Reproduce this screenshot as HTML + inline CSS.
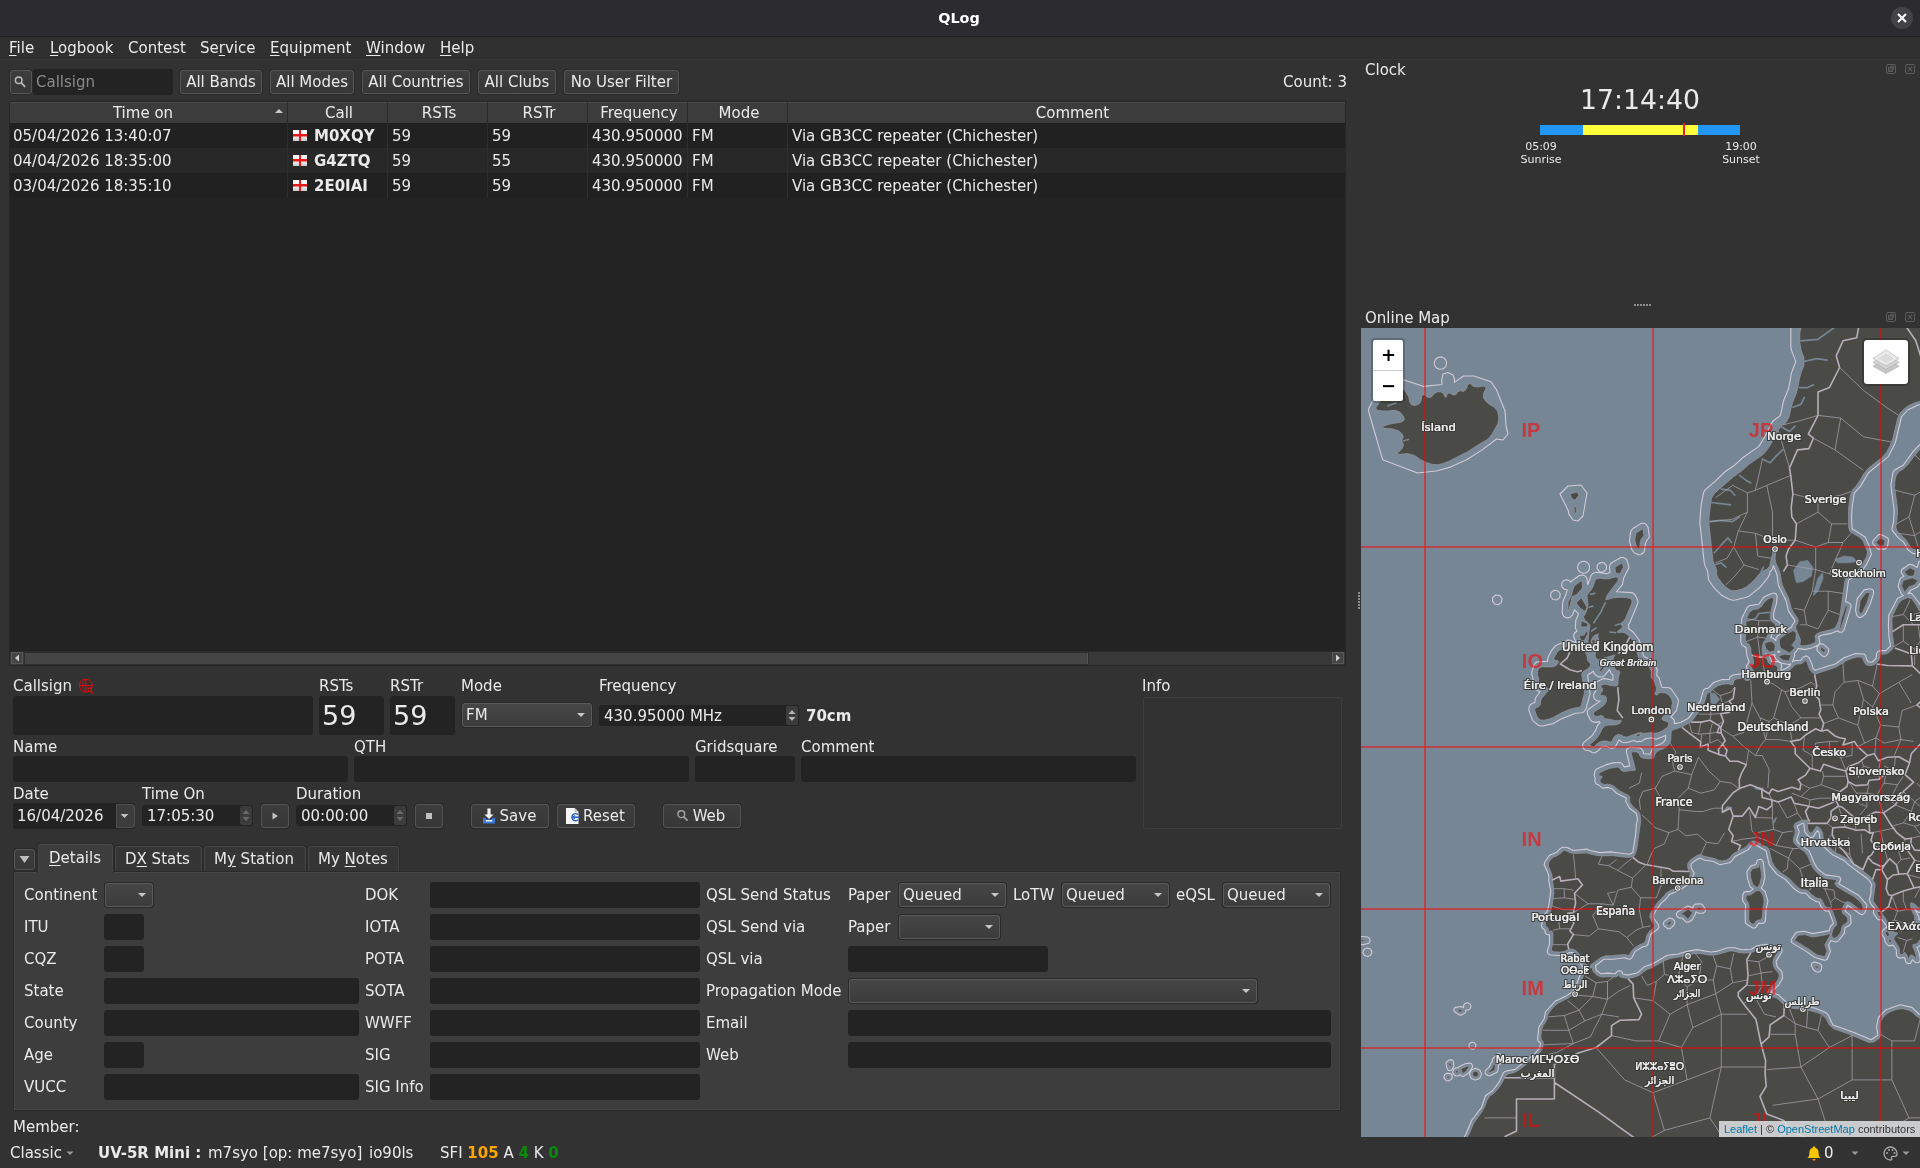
<!DOCTYPE html>
<html lang="en"><head><meta charset="utf-8"><title>QLog</title>
<style>
*{box-sizing:border-box;margin:0;padding:0}
html,body{width:1920px;height:1168px;overflow:hidden;background:#323232}
body{font-family:"DejaVu Sans","Liberation Sans",sans-serif;font-size:15px;color:#eaeaea;position:relative}
.a{position:absolute;white-space:nowrap}
.t{position:absolute;white-space:nowrap;line-height:20px;height:20px}
.in{position:absolute;background:#232323;border-radius:3px}
.btn{position:absolute;background:linear-gradient(#3d3d3d,#373737);border:1px solid #565656;border-radius:3px;box-shadow:0 0 0 1px #2a2a2a;text-align:center;line-height:22px;white-space:nowrap}
.cmb{position:absolute;background:linear-gradient(#464646,#3c3c3c);border:1px solid #5a5a5a;border-radius:3px;box-shadow:0 0 0 1px #292929;line-height:22px;padding-left:3px;white-space:nowrap}
.cmb:after{content:"";position:absolute;right:6px;top:8.500px;border:4px solid transparent;border-top:4px solid #c8c8c8;border-bottom:0}
u{text-decoration-thickness:1px;text-underline-offset:2px}
.th{position:absolute;top:102px;height:21px;background:#3c3c3c;border-right:1px solid #2a2a2a;border-top:1px solid #4c4c4c;text-align:center;line-height:21px;padding-left:3px}
.row{position:absolute;left:10px;width:1335px;height:25px}
.row span{position:absolute;top:1px;line-height:25px;white-space:nowrap}
.vl{position:absolute;top:123px;width:1px;height:75px;background:#2e2e2e}
#root{position:absolute;left:0;top:0;width:1920px;height:1168px;will-change:transform}
</style></head><body><div id="root">
<!-- title bar -->
<div class="a" style="left:0;top:0;width:1920px;height:37px;background:#2c2c30;border-bottom:1px solid #1e1e20"></div>
<div class="a" style="left:0;top:8px;width:1918px;text-align:center;font-weight:bold;font-size:14.400px;line-height:20px;color:#fff">QLog</div>
<div class="a" style="left:1891px;top:7px;width:22px;height:22px;border-radius:11px;background:#434347"></div>
<svg class="a" style="left:1891px;top:7px" width="22" height="22"><path d="M7 7l8 8M15 7l-8 8" stroke="#fff" stroke-width="2.100" fill="none"/></svg>
<!-- menu bar -->
<div class="a" style="left:0;top:37px;width:1920px;height:23px;background:#303030;border-bottom:1px solid #363636"></div>
<div class="t" style="left:9px;top:38px"><u>F</u>ile</div>
<div class="t" style="left:50px;top:38px"><u>L</u>ogbook</div>
<div class="t" style="left:128px;top:38px">Contest</div>
<div class="t" style="left:200px;top:38px">Se<u>r</u>vice</div>
<div class="t" style="left:270px;top:38px"><u>E</u>quipment</div>
<div class="t" style="left:366px;top:38px"><u>W</u>indow</div>
<div class="t" style="left:440px;top:38px"><u>H</u>elp</div>
<!-- filter row -->
<div class="btn" style="left:10px;top:70px;width:22px;height:24px"></div>
<svg class="a" style="left:10px;top:70px" width="22" height="24"><circle cx="8.700" cy="10.300" r="3.300" stroke="#bdbdbd" stroke-width="1.500" fill="none"/><path d="M11.200 12.800l4 4" stroke="#bdbdbd" stroke-width="1.700" fill="none"/></svg>
<div class="in" style="left:33px;top:69px;width:140px;height:26px"></div>
<div class="t" style="left:36px;top:72px;color:#8a8a8a">Callsign</div>
<div class="btn" style="left:180px;top:70px;width:82px;height:24px">All Bands</div>
<div class="btn" style="left:270px;top:70px;width:84px;height:24px">All Modes</div>
<div class="btn" style="left:362px;top:70px;width:108px;height:24px">All Countries</div>
<div class="btn" style="left:478px;top:70px;width:78px;height:24px">All Clubs</div>
<div class="btn" style="left:564px;top:70px;width:115px;height:24px">No User Filter</div>
<div class="t" style="left:1200px;top:72px;width:1147px;text-align:right;left:200px">Count: 3</div>
<!-- table -->
<div class="a" style="left:9px;top:101px;width:1337px;height:565px;background:#232323;border:1px solid #262626"></div>
<div class="th" style="left:10px;width:278px;padding-right:14px">Time on</div>
<svg class="a" style="left:274px;top:108px" width="10" height="6"><path d="M1 5l4-4 4 4z" fill="#c8c8c8"/></svg>
<div class="th" style="left:288px;width:100px">Call</div>
<div class="th" style="left:388px;width:100px">RSTs</div>
<div class="th" style="left:488px;width:100px">RSTr</div>
<div class="th" style="left:588px;width:100px">Frequency</div>
<div class="th" style="left:688px;width:100px">Mode</div>
<div class="th" style="left:788px;width:557px;border-right:0;padding-left:12px">Comment</div>
<div class="row" style="top:123px;background:#212121"><span style="left:3px">05/04/2026 13:40:07</span><span style="left:304px;font-weight:bold">M0XQY</span><span style="left:382px">59</span><span style="left:482px">59</span><span style="left:582px">430.950000</span><span style="left:682px">FM</span><span style="left:782px">Via GB3CC repeater (Chichester)</span></div>
<div class="row" style="top:148px;background:#282828"><span style="left:3px">04/04/2026 18:35:00</span><span style="left:304px;font-weight:bold">G4ZTQ</span><span style="left:382px">59</span><span style="left:482px">55</span><span style="left:582px">430.950000</span><span style="left:682px">FM</span><span style="left:782px">Via GB3CC repeater (Chichester)</span></div>
<div class="row" style="top:173px;background:#212121"><span style="left:3px">03/04/2026 18:35:10</span><span style="left:304px;font-weight:bold">2E0IAI</span><span style="left:382px">59</span><span style="left:482px">59</span><span style="left:582px">430.950000</span><span style="left:682px">FM</span><span style="left:782px">Via GB3CC repeater (Chichester)</span></div>
<div class="vl" style="left:287px"></div><div class="vl" style="left:387px"></div><div class="vl" style="left:487px"></div><div class="vl" style="left:587px"></div><div class="vl" style="left:687px"></div><div class="vl" style="left:787px"></div>
<svg class="a" style="left:293px;top:130px" width="15" height="62"><defs><linearGradient id="fg" x1="0" y1="0" x2="0" y2="1"><stop offset="0" stop-color="#fdfdfd"/><stop offset="0.600" stop-color="#f0f0f0"/><stop offset="1" stop-color="#c9c9c9"/></linearGradient></defs><g id="fl"><rect x="0" y="0" width="14" height="11" fill="url(#fg)"/><rect x="6" y="0" width="2" height="11" fill="#e81818"/><rect x="0" y="4" width="14" height="2.500" fill="#e81818"/></g><use href="#fl" y="25"/><use href="#fl" y="50"/></svg>
<!-- hscroll -->
<div class="a" style="left:10px;top:651px;width:1335px;height:14px;background:#383838;border-top:1px solid #2a2a2a"></div>
<div class="a" style="left:24px;top:652px;width:1065px;height:13px;background:#454545;border:1px solid #2e2e2e;box-shadow:inset -1px 0 0 #555"></div>
<div class="a" style="left:11px;top:652px;width:12px;height:12px;background:#444;border:1px solid #595959"></div>
<div class="a" style="left:1332px;top:652px;width:12px;height:12px;background:#444;border:1px solid #595959"></div>
<svg class="a" style="left:11px;top:652px" width="12" height="12"><path d="M8 2.5v7l-4-3.5z" fill="#d0d0d0"/></svg>
<svg class="a" style="left:1332px;top:652px" width="12" height="12"><path d="M4 2.5v7l4-3.5z" fill="#d0d0d0"/></svg>
<!-- entry form -->
<div class="t" style="left:13px;top:676px">Callsign</div>
<svg class="a" style="left:77px;top:677px" width="18" height="18" viewBox="0 0 18 18"><g stroke="#e40808" stroke-width="1" fill="none"><circle cx="8.800" cy="8.600" r="6.500"/><path d="M2.300 8.600h13M8.800 2.100v13M8.800 2.100c-4.200 3.500-4.200 9.500 0 13"/><circle cx="12.700" cy="12.700" r="1.800" fill="#323232" stroke-width="1.200"/><path d="M14 14.100l2 2.200" stroke-width="1.300"/></g></svg>
<div class="in" style="left:13px;top:696px;width:300px;height:39px"></div>
<div class="t" style="left:319px;top:676px">RSTs</div>
<div class="in" style="left:319px;top:696px;width:65px;height:39px"></div>
<div class="a" style="left:322px;top:698px;font-size:27px;line-height:35px">59</div>
<div class="t" style="left:390px;top:676px">RSTr</div>
<div class="in" style="left:390px;top:696px;width:65px;height:39px"></div>
<div class="a" style="left:393px;top:698px;font-size:27px;line-height:35px">59</div>
<div class="t" style="left:461px;top:676px">Mode</div>
<div class="cmb" style="left:462px;top:703px;width:130px;height:24px">FM</div>
<div class="t" style="left:599px;top:676px">Frequency</div>
<div class="in" style="left:599px;top:705px;width:200px;height:21px"></div>
<div class="t" style="left:604px;top:706px">430.95000 MHz</div>
<div class="a" style="left:786px;top:706px;width:12px;height:19px;background:#3c3c3c;border-radius:2px"></div>
<svg class="a" style="left:786px;top:706px" width="12" height="19"><path d="M2.5 8l3.5-4 3.500 4zM2.500 11l3.500 4 3.500-4z" fill="#b4b4b4"/></svg>
<div class="t" style="left:806px;top:706px;font-weight:bold">70cm</div>
<div class="t" style="left:13px;top:737px">Name</div>
<div class="in" style="left:13px;top:756px;width:335px;height:26px"></div>
<div class="t" style="left:354px;top:737px">QTH</div>
<div class="in" style="left:354px;top:756px;width:335px;height:26px"></div>
<div class="t" style="left:695px;top:737px">Gridsquare</div>
<div class="in" style="left:695px;top:756px;width:100px;height:26px"></div>
<div class="t" style="left:801px;top:737px">Comment</div>
<div class="in" style="left:801px;top:756px;width:335px;height:26px"></div>
<div class="t" style="left:1142px;top:676px">Info</div>
<div class="a" style="left:1143px;top:697px;width:199px;height:132px;border:1px solid #3d3d3d;border-radius:2px"></div>
<div class="t" style="left:13px;top:784px">Date</div>
<div class="in" style="left:13px;top:803px;width:122px;height:26px"></div>
<div class="t" style="left:17px;top:806px">16/04/2026</div>
<div class="a" style="left:116px;top:804px;width:19px;height:24px;background:#3c3c3c;border:1px solid #4e4e4e;border-radius:0 3px 3px 0"></div>
<svg class="a" style="left:115px;top:804px" width="20" height="24"><path d="M5.5 10h8l-4 4z" fill="#c0c0c0"/></svg>
<div class="t" style="left:142px;top:784px">Time On</div>
<div class="in" style="left:142px;top:805px;width:111px;height:21px"></div>
<div class="t" style="left:147px;top:806px">17:05:30</div>
<div class="a" style="left:240px;top:806px;width:12px;height:19px;background:#3c3c3c;border-radius:2px"></div>
<svg class="a" style="left:240px;top:806px" width="12" height="19"><path d="M2.500 8l3.500-4 3.500 4zM2.500 11l3.500 4 3.500-4z" fill="#6a6a6a"/></svg>
<div class="btn" style="left:261px;top:804px;width:28px;height:24px"></div>
<svg class="a" style="left:261px;top:804px" width="28" height="24"><path d="M11.500 8.500v7l5.500-3.500z" fill="#c0c0c0"/></svg>
<div class="t" style="left:296px;top:784px">Duration</div>
<div class="in" style="left:296px;top:805px;width:111px;height:21px"></div>
<div class="t" style="left:301px;top:806px">00:00:00</div>
<div class="a" style="left:394px;top:806px;width:12px;height:19px;background:#3c3c3c;border-radius:2px"></div>
<svg class="a" style="left:394px;top:806px" width="12" height="19"><path d="M2.500 8l3.500-4 3.500 4zM2.500 11l3.500 4 3.500-4z" fill="#6a6a6a"/></svg>
<div class="btn" style="left:415px;top:804px;width:28px;height:24px"></div>
<div class="a" style="left:426px;top:813px;width:6px;height:6px;background:#c0c0c0"></div>
<div class="btn" style="left:471px;top:804px;width:78px;height:24px;padding-left:16px">Save</div>
<svg class="a" style="left:481px;top:807px" width="16" height="18" viewBox="0 0 16 18"><path d="M6.400 1.500h3.200v6h3l-4.600 4.600-4.600-4.600h3z" fill="#f0f0f0"/><path d="M2 10.700h2.400l1.300 1.700h4.600l1.300-1.700h2.400v5.800h-12z" fill="#3b7ad4"/><rect x="4.800" y="13" width="6.400" height="1.500" fill="#f4f4f4"/></svg>
<div class="btn" style="left:557px;top:804px;width:78px;height:24px;padding-left:16px">Reset</div>
<svg class="a" style="left:565px;top:807px" width="16" height="18" viewBox="0 0 16 18"><path d="M1 1h8.500l4 3.800v12.200h-12.500z" fill="#f6f6f6"/><path d="M9.500 1v3.800h4z" fill="#c4c4c4"/><path d="M12.900 7.700a3.500 3.500 0 1 0 0 5" stroke="#2a62c8" stroke-width="1.500" fill="none"/><path d="M14.200 10.200h-5" stroke="#2a62c8" stroke-width="1.600"/><path d="M6.400 10.200l3.400-2.300v4.600z" fill="#2a62c8"/></svg>
<div class="btn" style="left:663px;top:804px;width:78px;height:24px;padding-left:14px">Web</div>
<svg class="a" style="left:675px;top:808px" width="16" height="16"><circle cx="6.300" cy="6.200" r="3.400" stroke="#a4a4a4" stroke-width="1.400" fill="none"/><path d="M8.800 8.800l3.800 3.800" stroke="#a4a4a4" stroke-width="1.700"/></svg>
<!-- tabs -->
<div class="a" style="left:13px;top:871px;width:1328px;height:240px;background:#3d3d3d;border:1px solid #2a2a2a;box-shadow:inset 0 0 0 1px #464646"></div>
<div class="btn" style="left:14px;top:849px;width:21px;height:21px"></div>
<svg class="a" style="left:14px;top:848.500px" width="21" height="21"><path d="M5.500 7h10l-5 7z" fill="#bdbdbd"/></svg>
<div class="a" style="left:37px;top:843px;width:77px;height:30px;background:#3d3d3d;border:1px solid #2a2a2a;border-bottom:0;border-radius:3px 3px 0 0;box-shadow:inset 0 1px 0 0 #4a4a4a,inset 1px 0 0 0 #464646,inset -1px 0 0 0 #464646"></div>
<div class="a" style="left:115px;top:846px;width:87px;height:25px;background:#353535;border:1px solid #454545;border-bottom:0;border-radius:3px 3px 0 0;box-shadow:0 0 0 1px #2a2a2a"></div>
<div class="a" style="left:204px;top:846px;width:102px;height:25px;background:#353535;border:1px solid #454545;border-bottom:0;border-radius:3px 3px 0 0;box-shadow:0 0 0 1px #2a2a2a"></div>
<div class="a" style="left:308px;top:846px;width:91px;height:25px;background:#353535;border:1px solid #454545;border-bottom:0;border-radius:3px 3px 0 0;box-shadow:0 0 0 1px #2a2a2a"></div>
<div class="a" style="left:13px;top:871px;width:1328px;height:1px;background:#2a2a2a"></div>
<div class="a" style="left:38px;top:871px;width:75px;height:2px;background:#3d3d3d"></div>
<div class="t" style="left:49px;top:848px"><u>D</u>etails</div>
<div class="t" style="left:125px;top:849px">D<u>X</u> Stats</div>
<div class="t" style="left:214px;top:849px">M<u>y</u> Station</div>
<div class="t" style="left:318px;top:849px">My <u>N</u>otes</div>
<!-- details pane -->
<div class="t" style="left:24px;top:885px">Continent</div>
<div class="cmb" style="left:105px;top:883px;width:48px;height:24px"></div>
<div class="t" style="left:24px;top:917px">ITU</div>
<div class="in" style="left:104px;top:914px;width:40px;height:26px"></div>
<div class="t" style="left:24px;top:949px">CQZ</div>
<div class="in" style="left:104px;top:946px;width:40px;height:26px"></div>
<div class="t" style="left:24px;top:981px">State</div>
<div class="in" style="left:104px;top:978px;width:255px;height:26px"></div>
<div class="t" style="left:24px;top:1013px">County</div>
<div class="in" style="left:104px;top:1010px;width:255px;height:26px"></div>
<div class="t" style="left:24px;top:1045px">Age</div>
<div class="in" style="left:104px;top:1042px;width:40px;height:26px"></div>
<div class="t" style="left:24px;top:1077px">VUCC</div>
<div class="in" style="left:104px;top:1074px;width:255px;height:26px"></div>
<div class="t" style="left:365px;top:885px">DOK</div>
<div class="in" style="left:430px;top:882px;width:270px;height:26px"></div>
<div class="t" style="left:365px;top:917px">IOTA</div>
<div class="in" style="left:430px;top:914px;width:270px;height:26px"></div>
<div class="t" style="left:365px;top:949px">POTA</div>
<div class="in" style="left:430px;top:946px;width:270px;height:26px"></div>
<div class="t" style="left:365px;top:981px">SOTA</div>
<div class="in" style="left:430px;top:978px;width:270px;height:26px"></div>
<div class="t" style="left:365px;top:1013px">WWFF</div>
<div class="in" style="left:430px;top:1010px;width:270px;height:26px"></div>
<div class="t" style="left:365px;top:1045px">SIG</div>
<div class="in" style="left:430px;top:1042px;width:270px;height:26px"></div>
<div class="t" style="left:365px;top:1077px">SIG Info</div>
<div class="in" style="left:430px;top:1074px;width:270px;height:26px"></div>
<div class="t" style="left:706px;top:885px">QSL Send Status</div>
<div class="t" style="left:706px;top:917px">QSL Send via</div>
<div class="t" style="left:706px;top:949px">QSL via</div>
<div class="t" style="left:706px;top:981px">Propagation Mode</div>
<div class="t" style="left:706px;top:1013px">Email</div>
<div class="t" style="left:706px;top:1045px">Web</div>
<div class="t" style="left:848px;top:885px">Paper</div>
<div class="cmb" style="left:899px;top:883px;width:107px;height:24px">Queued</div>
<div class="t" style="left:1013px;top:885px">LoTW</div>
<div class="cmb" style="left:1062px;top:883px;width:107px;height:24px">Queued</div>
<div class="t" style="left:1176px;top:885px">eQSL</div>
<div class="cmb" style="left:1223px;top:883px;width:107px;height:24px">Queued</div>
<div class="t" style="left:848px;top:917px">Paper</div>
<div class="cmb" style="left:899px;top:915px;width:101px;height:24px"></div>
<div class="in" style="left:848px;top:946px;width:200px;height:26px"></div>
<div class="cmb" style="left:849px;top:979px;width:408px;height:24px"></div>
<div class="in" style="left:848px;top:1010px;width:483px;height:26px"></div>
<div class="in" style="left:848px;top:1042px;width:483px;height:26px"></div>
<div class="t" style="left:13px;top:1117px">Member:</div>
<!-- status bar -->
<div class="t" style="left:10px;top:1143px">Classic</div>
<svg class="a" style="left:66px;top:1151px" width="8" height="5"><path d="M0.500 0.500h7l-3.500 3.500z" fill="#9a9a9a"/></svg>
<div class="t" style="left:98px;top:1143px"><b>UV-5R Mini :</b></div>
<div class="t" style="left:208px;top:1143px">m7syo [op: me7syo]</div>
<div class="t" style="left:369px;top:1143px">io90ls</div>
<div class="t" style="left:440px;top:1143px">SFI <b style="color:#ffa500">105</b> A <b style="color:#0a8a0a">4</b> K <b style="color:#0a8a0a">0</b></div>
<svg class="a" style="left:1806px;top:1144.500px" width="16" height="18" viewBox="0 0 16 18"><path d="M8 1.500c.8 0 1.300.5 1.300 1.200 2.200.7 3.300 2.500 3.300 5 0 3 .6 4.200 2 5.300h-13.200c1.400-1.100 2-2.300 2-5.300 0-2.500 1.100-4.300 3.300-5 0-.7.500-1.200 1.300-1.200z" fill="#fdc500"/><path d="M6.300 14h3.400a1.700 1.700 0 0 1-3.400 0z" fill="#f08a10"/></svg>
<div class="t" style="left:1824px;top:1143px">0</div>
<svg class="a" style="left:1851px;top:1151px" width="8" height="5"><path d="M0.500 0.500h7l-3.500 3.500z" fill="#9a9a9a"/></svg>
<svg class="a" style="left:1882px;top:1145px" width="17" height="17" viewBox="0 0 17 17"><path d="M8.500 2a6.500 6.500 0 1 0 0 13c1.300 0 1.600-.9 1.100-1.700-.6-1 .1-2 1.200-2h2.200c1.200 0 2-1 2-2.300 0-3.900-2.900-7-6.500-7z" stroke="#a8a8a8" stroke-width="1.300" fill="none"/><circle cx="5" cy="8" r="1" fill="#a8a8a8"/><circle cx="7" cy="5" r="1" fill="#a8a8a8"/><circle cx="10.500" cy="5" r="1" fill="#a8a8a8"/><circle cx="12.500" cy="8" r="1" fill="#a8a8a8"/></svg>
<svg class="a" style="left:1902px;top:1151px" width="8" height="5"><path d="M0.500 0.500h7l-3.500 3.500z" fill="#9a9a9a"/></svg>
<!-- clock dock -->
<div class="t" style="left:1365px;top:60px">Clock</div>
<svg class="a" style="left:1885px;top:63px" width="32" height="12"><g stroke="#5c5c5c" fill="none" stroke-width="1"><rect x="1.500" y="1.500" width="9" height="9" rx="1.500"/><rect x="3.700" y="4.700" width="3.600" height="3.600" stroke-width="1.300"/><path d="M5.500 4v-.800h3.300v3.300h-.800" stroke-width="1"/><rect x="20.500" y="1.500" width="9" height="9" rx="1.500"/><path d="M22.700 3.700l4.600 4.600M27.300 3.700l-4.600 4.600" stroke-width="1.200"/></g></svg>
<div class="a" style="left:1540px;top:83px;width:200px;text-align:center;font-size:26.700px;line-height:34px">17:14:40</div>
<div class="a" style="left:1540px;top:125px;width:200px;height:10px;background:#2196f3"></div>
<div class="a" style="left:1583px;top:125px;width:115px;height:10px;background:#ffff3b"></div>
<div class="a" style="left:1683px;top:123px;width:2px;height:13px;background:#e02020"></div>
<div class="a" style="left:1491px;top:140px;width:100px;text-align:center;font-size:11px;line-height:13px">05:09<br>Sunrise</div>
<div class="a" style="left:1691px;top:140px;width:100px;text-align:center;font-size:11px;line-height:13px">19:00<br>Sunset</div>
<!-- splitters -->
<svg class="a" style="left:1634px;top:304px" width="18" height="2"><path d="M0 1h18" stroke="#8e8e8e" stroke-width="2" stroke-dasharray="2 1"/></svg>
<svg class="a" style="left:1358px;top:592px" width="2" height="18"><path d="M1 0v18" stroke="#8e8e8e" stroke-width="2" stroke-dasharray="2 1"/></svg>
<!-- map dock -->
<div class="t" style="left:1365px;top:308px">Online Map</div>
<svg class="a" style="left:1885px;top:311px" width="32" height="12"><g stroke="#5c5c5c" fill="none" stroke-width="1"><rect x="1.500" y="1.500" width="9" height="9" rx="1.500"/><rect x="3.700" y="4.700" width="3.600" height="3.600" stroke-width="1.300"/><path d="M5.500 4v-.800h3.300v3.300h-.800" stroke-width="1"/><rect x="20.500" y="1.500" width="9" height="9" rx="1.500"/><path d="M22.700 3.700l4.600 4.600M27.300 3.700l-4.600 4.600" stroke-width="1.200"/></g></svg>
<div class="a" style="left:1361px;top:328px;width:559px;height:809px;overflow:hidden;background:#768694">
<svg width="559" height="809" viewBox="0 0 559 809" style="position:absolute;left:0;top:0">
<path d="M82.9 30.0L80.7 29.1L78.3 29.1L76.0 30.0L74.3 31.7L73.4 33.9L73.4 36.4L74.3 38.6L76.0 40.3L78.3 41.2L80.7 41.2L82.9 40.3L84.6 38.6L85.5 36.4L85.5 33.9L84.6 31.7ZM82.0 46.0L80.7 51.9L81.0 56.5L63.0 58.4L42.4 51.8L39.7 53.7L37.3 52.4L30.3 52.6L28.7 54.1L25.7 60.4L18.9 64.7L17.2 69.3L11.3 73.4L7.5 81.0L7.5 83.0L21.7 131.8L56.5 145.0L75.3 143.0L88.5 139.4L105.5 131.8L120.5 122.4L135.6 111.0L142.0 112.0L147.0 106.0L145.0 98.0L144.0 83.0L135.6 62.0L130.0 53.7L113.0 48.0L102.6 48.0L93.4 54.4L93.6 51.2L92.0 47.0L87.0 44.5ZM-4.8 609.7L-5.5 611.7L-4.6 614.0L1.5 616.9L7.8 615.2L9.2 613.0L8.6 610.4L6.5 609.0L-2.1 608.3ZM3.4 621.1L2.3 622.6L1.9 624.7L3.4 627.5L6.7 628.5L9.4 627.5L10.9 624.7L10.5 622.6L9.4 621.1L6.1 620.0ZM103.6 675.8L102.6 677.5L102.7 679.7L100.1 678.5L94.1 679.4L92.8 681.3L93.2 683.5L98.5 687.1L100.4 686.9L103.8 685.2L104.8 683.8L104.8 681.8L106.4 682.2L108.8 681.2L110.0 678.3L109.5 676.7L107.8 675.2L106.0 674.8ZM90.6 731.6L88.0 732.0L85.9 733.5L84.8 735.2L86.0 740.5L87.4 742.3L88.5 742.6L90.8 742.0L93.0 738.1L92.3 733.1ZM97.4 739.0L97.0 739.8L94.9 739.9L92.9 740.9L91.6 743.9L92.2 746.1L94.9 748.0L97.1 748.0L99.2 746.7L100.3 748.0L102.2 748.5L107.3 745.3L111.1 739.8L111.6 737.9L110.5 735.8L108.3 735.1L104.2 735.7ZM83.2 750.4L85.3 752.6L88.1 752.9L90.8 751.1L91.4 748.1L90.0 745.9L86.3 745.1L83.6 746.8L82.9 748.6ZM261.8 646.0L260.8 643.6L258.4 642.6L256.0 643.6L254.2 645.7L247.0 645.1L239.6 645.7L235.1 642.0L234.6 637.8L242.9 631.2L252.6 631.2L263.7 629.7L267.9 631.2L269.5 630.9L271.1 629.3L274.1 623.4L281.9 618.8L284.7 618.2L286.8 616.8L289.5 606.5L296.6 601.3L298.0 599.2L297.4 596.6L292.8 590.5L292.0 588.0L294.9 582.5L300.2 575.1L304.6 571.5L308.4 566.6L318.7 562.3L330.1 554.2L333.2 545.0L330.1 539.7L330.1 536.1L333.8 532.7L338.8 529.9L343.9 532.2L351.8 533.2L358.9 536.7L368.4 534.8L370.4 533.5L374.0 528.6L387.1 521.8L390.9 517.0L393.3 516.2L405.0 522.7L408.2 536.7L415.7 546.1L424.1 551.2L433.7 561.3L439.1 564.9L444.9 565.3L449.6 570.4L455.4 573.8L457.9 573.8L460.2 578.9L463.6 582.3L465.8 583.2L467.9 583.0L472.5 595.4L469.4 598.5L468.1 602.6L451.6 605.6L443.6 603.2L436.5 604.0L434.4 605.2L430.1 611.8L430.5 614.2L431.4 615.1L444.9 623.1L453.9 629.5L462.9 632.1L464.3 632.2L466.2 631.2L469.5 623.3L467.5 617.0L470.1 612.5L474.8 614.1L477.2 613.0L483.3 605.3L484.1 599.7L488.6 597.2L490.1 595.3L489.6 587.6L484.0 582.9L486.7 577.1L499.1 586.0L501.4 586.6L503.8 585.1L505.9 577.6L505.1 575.8L498.0 567.6L477.7 555.8L479.7 551.7L479.1 549.6L478.2 548.7L464.2 546.9L456.4 540.6L452.7 534.0L448.4 523.1L437.6 515.4L435.5 511.9L438.2 503.9L436.2 498.1L441.7 495.2L442.8 495.3L443.7 503.7L447.6 508.4L449.6 509.6L452.2 508.9L456.3 502.6L458.2 504.5L459.1 512.5L463.0 519.1L471.4 526.7L483.5 532.8L488.3 537.4L506.9 551.0L509.3 554.2L510.8 556.7L509.9 560.4L509.9 566.2L508.2 572.3L510.3 576.7L514.0 580.9L512.7 582.1L512.3 584.6L516.0 590.8L517.7 591.7L521.1 591.7L525.1 597.4L526.0 599.2L523.9 600.3L521.3 603.2L520.7 605.4L521.1 606.7L523.7 610.8L523.8 613.0L526.1 616.7L528.4 617.9L532.0 617.1L535.2 621.5L535.5 626.9L536.6 629.2L538.9 630.1L543.5 629.5L544.9 634.2L547.1 635.7L549.8 635.1L551.4 631.7L554.5 634.7L557.8 634.5L559.0 633.1L559.3 631.1L558.2 624.7L555.9 619.4L557.8 618.8L560.5 615.4L564.9 617.7L567.5 617.7L569.3 615.8L569.6 612.7L573.7 610.9L575.0 609.3L575.0 606.7L570.1 598.9L560.1 592.1L558.1 591.6L557.9 589.0L553.7 580.9L555.7 583.2L558.0 584.4L571.1 580.3L572.7 578.8L572.8 576.2L569.2 572.2L571.9 570.2L589.0 570.0L589.0 -30.0L584.3 -30.0L584.3 13.5L580.0 -30.0L450.7 -30.0L448.5 -26.8L446.8 -27.1L443.4 -26.4L440.4 -24.5L438.5 -21.6L430.5 -2.8L429.8 0.5L429.8 18.8L430.4 22.1L434.8 33.6L430.4 44.9L427.8 60.0L422.5 73.0L419.3 87.6L412.3 92.8L410.6 94.9L404.7 107.2L397.9 118.4L381.6 129.8L372.9 137.8L364.2 143.5L354.3 153.1L343.6 162.3L342.3 165.6L340.0 177.7L338.8 194.4L343.4 235.9L346.7 243.6L347.4 251.5L352.9 259.7L360.9 267.6L368.7 271.5L372.2 272.2L374.3 272.0L385.4 269.3L388.3 267.9L399.1 259.2L407.1 249.3L408.7 246.2L408.9 243.8L411.3 241.7L412.4 237.6L416.0 246.6L417.4 257.2L425.2 273.0L427.4 283.1L433.8 292.4L433.3 294.3L430.9 297.7L430.8 299.3L423.5 302.9L416.2 308.3L415.1 309.8L414.8 312.7L412.0 310.0L409.7 309.7L411.5 305.1L418.3 299.5L419.5 297.4L418.7 294.6L412.7 290.7L412.7 284.9L415.5 275.3L416.1 268.5L415.3 266.3L413.9 265.3L411.6 265.2L403.8 268.6L402.3 269.8L397.8 276.3L388.5 277.6L386.3 279.2L380.8 290.3L379.7 304.7L379.7 313.9L381.0 317.1L385.1 319.8L385.9 327.6L388.1 334.0L385.4 338.1L385.8 340.9L388.3 344.6L386.4 347.9L383.6 346.0L381.9 345.6L372.1 347.0L369.2 348.8L368.3 351.4L361.1 351.6L352.7 354.5L346.9 360.3L344.3 360.6L342.4 362.1L339.6 372.5L334.9 380.3L327.5 390.2L319.4 394.5L313.3 395.6L313.4 393.2L312.7 391.2L309.9 388.9L315.4 382.6L317.3 374.4L317.3 372.3L316.6 370.3L310.0 360.7L308.0 359.8L300.9 359.2L298.0 349.9L295.7 347.4L296.2 341.5L295.3 339.6L288.6 330.7L282.8 328.6L278.3 312.0L271.9 303.8L267.7 300.7L267.8 298.2L267.2 296.8L268.7 294.8L276.5 276.2L277.0 274.1L276.7 272.0L274.1 267.0L271.5 264.6L255.4 263.8L261.5 256.7L262.7 249.9L267.9 240.0L267.7 237.9L265.7 231.5L262.6 229.5L259.9 229.5L251.1 234.5L249.5 236.0L248.5 237.9L248.9 244.6L245.9 245.7L235.0 244.3L231.8 245.4L230.0 247.8L226.7 256.8L225.8 249.9L223.9 247.8L221.9 247.0L218.4 247.5L211.5 252.2L209.8 254.1L207.9 252.4L205.5 251.8L202.8 252.6L201.1 254.4L200.6 257.3L201.4 259.5L203.6 261.4L206.2 261.7L204.9 266.6L201.8 273.4L201.2 284.1L201.7 286.7L203.0 288.5L204.8 289.6L206.9 289.9L209.0 289.4L211.6 286.8L213.5 281.8L217.7 285.8L214.8 292.2L214.3 298.9L214.7 301.0L216.1 303.0L213.5 305.0L212.5 308.2L215.4 315.5L209.3 312.2L207.1 312.1L194.8 317.4L190.4 322.7L186.9 329.6L186.5 333.4L176.1 333.8L174.3 335.0L173.1 336.8L170.5 344.8L172.2 351.7L170.5 355.5L170.6 357.6L171.5 359.5L173.1 361.0L179.1 363.5L174.3 370.2L173.9 374.3L169.4 376.6L168.0 378.7L167.9 382.6L171.9 392.9L177.5 397.2L179.4 398.0L181.5 398.0L192.3 395.6L200.1 391.1L214.6 385.2L220.8 384.8L222.7 384.0L224.9 381.2L229.1 365.7L226.6 347.3L232.5 343.3L233.2 345.5L235.2 347.6L237.9 348.9L241.1 349.0L243.8 347.4L248.3 341.6L250.1 345.3L252.0 347.3L251.8 352.3L242.4 350.4L236.4 353.4L234.7 354.8L233.8 356.7L234.0 360.2L235.2 362.1L232.6 366.2L232.9 369.7L234.1 371.5L235.9 372.7L239.1 373.1L227.4 381.3L226.4 383.2L226.3 385.5L229.1 391.6L231.1 393.6L234.5 394.4L238.4 393.6L239.1 394.6L236.3 397.7L235.1 401.4L231.0 407.8L222.5 414.6L221.7 416.6L221.8 418.8L222.7 420.7L224.3 422.2L228.2 422.8L231.6 424.8L233.7 424.8L237.0 423.0L240.4 419.2L244.3 418.2L250.4 420.3L252.6 419.9L254.4 418.7L257.9 412.0L261.3 414.2L265.3 414.8L273.0 412.5L275.4 413.7L279.8 413.4L281.8 412.7L283.4 411.1L289.9 409.8L295.1 411.2L304.6 407.5L304.7 409.3L304.0 412.5L301.4 415.2L292.5 418.9L288.9 426.2L282.9 425.7L281.8 422.5L279.5 419.9L270.0 419.1L267.1 420.1L265.7 421.7L265.3 423.4L268.8 437.9L263.3 438.9L260.7 435.4L259.2 434.5L251.8 434.9L244.7 436.9L236.1 440.7L233.8 443.2L233.2 447.4L234.3 450.6L233.7 453.1L235.3 456.1L237.8 457.1L241.5 460.1L247.2 459.4L251.8 461.3L255.2 464.9L265.3 470.2L264.7 473.2L268.6 480.3L275.3 485.5L276.6 491.5L275.5 495.4L274.4 508.2L271.8 524.6L268.6 526.2L249.3 523.9L238.8 524.6L228.9 522.5L225.8 521.1L212.4 522.5L205.5 519.2L201.9 519.2L199.7 520.2L195.6 524.3L188.3 527.5L183.7 534.3L183.2 536.8L186.4 543.7L187.9 548.2L187.7 552.7L189.8 563.1L187.8 577.2L186.0 583.7L182.1 588.6L180.5 598.1L181.5 600.6L183.9 601.9L184.2 604.7L184.9 605.8L186.3 606.7L188.5 606.7L188.5 616.1L186.4 622.5L186.4 624.7L187.4 626.1L189.4 627.0L202.0 627.7L208.7 624.6L211.7 624.5L216.2 628.6L217.4 632.3L220.8 637.7L222.3 638.7L213.9 660.3L211.3 663.8L204.1 668.6L194.0 673.3L184.4 684.0L183.3 690.5L177.9 699.0L176.6 711.4L177.2 713.0L179.5 715.1L178.8 719.5L174.2 725.4L154.1 741.4L144.4 743.3L142.5 744.6L138.1 754.2L131.8 762.5L124.5 767.7L120.4 779.7L110.6 792.5L105.0 806.0L96.7 820.9L96.7 839.0L486.5 839.0L584.4 809.5L584.4 839.0L589.0 839.0L589.0 695.1L577.2 694.9L557.9 686.0L551.0 679.4L539.0 676.7L525.0 681.7L517.9 689.0L517.0 690.8L515.6 699.1L516.9 707.3L510.1 711.7L491.1 703.7L471.9 696.9L466.9 686.3L465.1 684.7L454.3 680.2L442.7 677.5L430.4 677.0L425.4 674.3L417.5 666.8L409.7 664.4L417.5 657.4L421.6 650.1L420.9 643.7L416.2 638.7L415.1 633.1L420.8 624.2L421.0 622.0L419.6 619.9L417.9 619.3L415.8 619.9L413.4 622.0L411.8 622.2L410.4 618.5L405.0 616.2L395.9 617.7L390.4 621.2L380.8 621.8L373.9 619.7L366.5 619.7L356.8 623.1L349.9 624.0L335.8 621.6L325.9 623.4L316.4 626.2L306.3 627.3L291.4 635.9L283.5 638.7L276.7 644.7L266.8 647.1ZM583.6 563.4L584.3 535.7L584.3 563.4ZM474.7 335.7L454.2 342.3L452.1 340.8L451.1 336.5L448.2 329.9L446.3 328.2L445.0 327.9L442.5 329.0L439.5 332.5L433.8 332.5L431.4 333.9L433.7 327.6L433.3 325.4L436.1 322.7L437.1 320.4L444.0 321.6L451.6 319.7L456.8 317.3L458.3 316.0L458.8 314.0L457.6 308.9L460.4 307.3L470.2 305.4L476.5 302.8L478.6 304.3L481.2 304.1L483.0 302.1L490.0 278.7L490.0 277.3L488.7 275.3L484.6 273.6L487.5 252.4L499.6 244.6L505.6 236.4L510.5 226.1L508.1 217.9L504.2 209.0L491.1 200.7L490.6 188.9L491.2 178.5L493.3 165.1L499.8 157.9L507.5 144.7L527.1 128.9L534.3 115.0L540.4 89.0L546.7 82.0L557.0 77.0L565.9 76.0L576.3 88.5L575.3 99.3L552.3 123.4L542.2 137.2L533.5 142.0L532.1 144.0L529.8 156.8L533.1 181.8L532.6 193.1L530.9 201.1L531.6 202.8L537.3 209.8L542.9 214.4L546.8 221.7L552.1 225.6L554.8 225.8L571.8 220.1L584.3 216.7L584.3 227.1L569.4 228.2L558.0 233.5L556.0 239.5L550.9 236.6L548.4 236.3L540.5 241.8L540.1 244.6L542.9 248.6L540.7 249.3L539.2 250.7L537.1 258.2L540.3 265.9L542.3 267.6L536.4 270.4L527.7 287.2L527.4 298.9L528.0 309.3L529.5 318.0L524.9 322.6L519.0 322.6L516.8 323.4L515.5 325.8L515.1 330.4L511.3 334.0L507.3 334.0L505.7 331.6L504.6 327.7L503.0 326.0L494.5 325.6L483.0 329.7ZM408.2 327.6L414.0 326.6L413.7 328.3L414.4 330.3L419.9 335.0L427.4 336.5L429.8 335.9L427.4 339.1L421.4 342.2L420.0 342.2L420.6 337.6L419.8 335.1L417.6 333.9L410.6 333.2ZM416.9 324.5L417.3 322.8L419.0 323.9ZM404.7 325.8L404.7 325.6L405.0 325.9ZM550.7 265.5L549.1 265.1L546.8 265.8L550.1 261.9L556.1 259.3L559.9 254.4L566.1 258.6L566.1 267.1L563.3 280.3L561.3 280.6L558.2 275.0ZM196.7 262.7L192.9 262.3L190.0 264.7L189.6 268.5L192.0 271.5L195.8 271.9L198.8 269.4L199.2 265.6ZM138.6 267.4L134.8 267.0L131.8 269.4L131.5 273.2L133.9 276.2L137.7 276.6L140.6 274.1L141.0 270.3ZM113.1 714.5L110.4 714.2L108.3 715.9L108.0 718.7L109.7 720.8L112.5 721.1L114.6 719.3L114.9 716.6ZM142.4 729.2L141.4 727.6L138.9 725.8L137.4 725.7L135.7 726.6L131.3 731.4L131.3 733.6L130.1 734.7L128.0 739.2L124.4 742.7L124.0 744.1L124.8 746.3L127.1 747.7L129.0 747.7L136.0 744.3L136.8 742.7L137.6 736.9L139.9 735.4L142.1 731.4ZM120.6 746.1L118.8 741.9L114.5 740.2L110.2 741.9L108.4 746.2L110.2 750.4L114.5 752.1L118.8 750.4ZM207.8 186.1L212.0 192.0L217.0 193.0L222.0 188.0L226.0 165.0L220.0 157.0L207.0 158.0L199.0 166.0L207.3 182.7ZM225.4 234.0L223.2 233.3L220.9 233.5L218.8 234.6L217.3 236.4L216.6 238.7L216.9 241.0L218.0 243.0L219.8 244.5L222.0 245.2L224.3 245.0L226.4 243.9L227.9 242.1L228.6 239.8L228.3 237.5L227.2 235.4ZM243.2 234.8L239.3 234.5L236.4 236.9L236.0 240.7L238.4 243.7L242.3 244.0L245.2 241.6L245.6 237.8ZM283.0 195.3L280.9 195.2L278.7 196.1L271.7 200.8L270.3 202.4L269.5 204.4L268.4 213.4L270.9 221.9L273.4 225.0L277.7 226.8L280.1 226.5L283.1 224.0L284.8 214.3L288.3 208.8L287.1 199.5L285.0 196.1ZM316.5 584.0L315.3 586.3L316.2 588.8L318.0 589.9L321.2 590.2L324.9 593.9L327.4 594.3L331.3 591.7L334.4 586.0L334.8 583.8L337.2 585.1L341.9 585.3L344.0 583.9L344.5 581.3L341.1 576.3L339.0 575.8L335.0 576.1L332.7 577.3L332.0 578.4L332.1 580.6L329.2 578.5L326.7 577.9ZM313.9 594.3L313.6 593.0L311.3 590.7L308.3 589.9L303.0 593.6L302.3 596.1L303.6 598.4L306.8 600.7L308.4 600.8L310.5 599.7L313.1 596.8ZM396.2 532.6L394.8 536.5L389.5 538.1L385.9 543.6L386.5 550.4L388.9 558.0L389.6 559.2L392.1 560.9L388.4 563.9L385.7 563.4L383.2 564.1L382.0 566.1L381.4 570.8L382.0 573.3L384.7 576.8L384.2 583.2L384.4 594.8L385.7 596.3L392.2 600.2L394.7 599.6L397.5 595.4L402.4 595.2L404.3 593.5L405.2 580.7L406.9 573.1L404.2 563.7L400.3 560.1L402.3 556.2L404.0 549.4L402.3 534.1L401.0 532.0L399.8 531.3L397.3 531.7ZM459.5 315.8L457.6 317.0L456.2 319.4L456.0 322.5L460.8 327.7L463.2 328.6L464.6 328.3L466.5 326.4L467.8 323.0L467.6 320.7L462.1 316.1ZM460.5 637.0L458.7 635.5L453.4 633.9L451.0 635.0L450.2 637.5L452.6 642.0L455.2 643.7L457.4 644.2L459.0 643.6L460.3 641.7L460.9 638.5ZM526.8 210.0L520.1 206.6L517.7 206.6L512.4 212.2L511.5 214.5L511.8 215.8L517.1 221.1L524.3 221.1L526.4 218.6L527.6 212.3ZM512.3 262.5L511.4 261.5L509.0 260.8L503.0 261.9L496.0 271.1L494.5 282.0L495.7 287.1L497.4 289.2L500.1 289.4L504.3 286.2L509.2 276.0L512.7 265.2Z" fill="#798997" stroke="#d2cad6" stroke-width="1.1" stroke-linejoin="round"/>
<path d="M71.6 136.4L77.2 136.7L82.4 135.4L88.3 133.0L107.1 123.4L121.0 114.4L125.0 112.5L128.4 109.5L131.3 105.5L137.0 95.5L137.8 89.7L136.7 83.6L133.6 79.2L128.4 76.4L124.7 73.3L122.5 69.8L122.6 65.4L125.2 60.0L123.2 57.9L116.6 59.1L111.9 58.2L109.1 55.4L106.8 56.4L105.1 61.4L102.6 63.5L99.1 62.8L96.6 63.8L94.9 66.7L92.2 67.0L88.5 64.9L86.2 65.6L85.4 69.1L84.1 69.1L82.4 65.6L79.8 63.9L76.4 63.9L73.3 65.6L70.4 69.1L67.0 69.5L63.0 66.7L60.7 67.7L60.2 72.6L58.5 75.7L55.6 77.1L52.9 77.4L50.4 76.8L48.7 74.0L47.8 69.1L44.8 63.8L39.7 58.2L35.7 55.4L32.9 55.4L30.6 57.1L28.9 60.7L26.3 63.5L22.9 65.6L20.6 68.4L19.5 71.9L17.5 75.7L14.7 79.8L16.1 82.3L21.8 82.9L27.8 82.9L34.0 82.3L38.8 84.0L42.3 88.1L43.4 91.1L42.3 93.1L38.8 94.5L33.2 95.2L27.3 96.5L21.4 98.5L22.8 100.0L31.6 100.9L37.7 102.9L41.1 106.0L42.3 108.8L41.1 111.5L41.1 113.8L42.3 115.7L42.3 118.0L41.1 120.6L38.8 123.1L35.4 125.4L38.0 126.3L46.5 125.6L53.6 127.4L59.3 131.5L65.3 134.5ZM214.1 172.1L218.0 167.2L215.8 164.0L208.9 166.0L211.2 170.9ZM215.2 179.3L212.9 178.1L213.5 184.1L215.2 186.0ZM208.9 278.1L211.2 268.6L215.8 266.4L221.5 260.0L220.9 252.4L214.6 256.8L212.4 260.0L210.1 268.6L207.2 273.9L206.7 284.4ZM197.0 322.9L192.7 330.3L193.6 332.3L197.0 332.8L197.6 334.5L195.3 337.4L192.2 338.9L180.2 338.9L177.7 340.5L176.5 343.7L176.5 347.1L177.7 350.6L177.7 353.4L176.5 355.3L177.7 357.0L187.9 360.5L188.5 361.9L186.2 363.8L180.8 370.4L179.4 373.7L179.4 376.5L177.8 378.6L174.7 380.0L173.5 381.8L176.1 388.7L177.5 390.6L179.5 391.9L182.8 392.2L187.3 391.3L191.6 389.7L199.6 385.3L207.5 381.8L215.1 379.7L218.2 379.5L220.2 377.4L223.2 366.1L223.4 362.6L220.6 345.9L222.3 343.5L226.3 341.1L228.7 338.9L229.6 336.9L229.0 335.0L227.0 333.0L226.2 331.0L226.4 329.1L225.4 326.2L223.2 322.6L219.9 320.8L215.6 321.0L212.1 320.2L209.2 318.4L206.7 318.2ZM1.9 611.7L-2.1 611.7L1.9 613.5L5.8 612.4ZM6.4 625.1L7.6 624.3L6.4 623.4L5.3 624.3ZM106.8 679.0L106.8 678.0L105.6 678.0L105.6 679.0ZM99.7 681.5L95.7 681.9L99.1 684.2L102.0 682.8ZM135.0 734.5L137.3 733.8L139.5 729.9L137.8 728.6L134.1 732.5ZM89.7 734.5L87.8 735.8L88.9 739.7L90.0 737.7ZM130.4 741.0L127.0 744.2L128.2 744.8L133.8 742.3L134.6 736.4L132.7 736.2ZM102.0 745.5L104.8 743.6L108.6 738.1L105.4 738.4L99.7 741.0ZM96.9 744.9L97.3 743.9L96.9 743.0L96.0 742.6L95.0 743.0L94.6 743.9L95.0 744.9L96.0 745.2ZM116.7 748.2L117.6 746.1L116.7 744.0L114.5 743.2L112.3 744.0L111.4 746.1L112.3 748.2L114.5 749.1ZM87.2 750.0L88.2 749.7L88.6 749.0L88.2 748.2L87.2 747.9L86.2 748.2L85.8 749.0L86.2 749.7ZM274.9 205.3L273.8 212.2L276.1 220.2L278.3 221.3L279.5 212.2L282.9 207.6L281.8 200.6ZM259.0 245.9L262.4 239.2L261.3 234.8L253.9 239.2L254.5 244.8ZM215.2 275.0L219.2 280.2L224.3 283.4L226.0 279.2L220.3 269.6ZM227.1 295.8L220.3 292.7L219.8 298.9L226.0 298.9ZM220.3 313.1L223.7 312.1L227.1 305.0L224.9 303.0L223.2 307.1L218.0 308.1ZM234.0 316.1L234.0 312.1L231.1 311.1L231.1 315.1ZM239.2 413.8L242.9 412.9L246.2 413.1L249.0 414.2L251.2 413.1L252.6 409.7L254.6 407.5L257.2 406.4L259.9 406.8L262.7 408.5L265.5 409.1L278.1 404.8L280.3 404.7L282.0 405.4L291.4 404.5L293.7 405.3L296.9 404.8L301.0 403.1L306.3 399.5L307.5 397.5L307.8 395.1L305.9 393.4L302.0 392.3L300.7 390.6L303.8 386.4L309.4 381.6L310.6 378.8L311.5 375.1L310.6 371.2L308.1 367.2L304.5 365.0L300.0 364.6L297.4 365.2L296.8 366.8L295.7 367.1L294.0 366.2L293.8 364.8L295.3 362.9L295.3 359.6L293.8 354.8L292.3 351.7L290.6 350.3L290.0 347.8L290.6 344.5L289.4 340.8L286.6 336.9L283.5 334.5L280.1 333.5L277.8 331.0L274.4 317.6L272.7 313.8L268.0 307.7L263.7 304.8L260.4 304.2L256.4 304.5L256.4 303.3L260.4 300.6L261.6 298.4L259.9 296.7L260.1 295.0L262.4 293.5L264.7 289.9L270.7 275.7L271.0 272.8L269.8 270.7L265.3 269.5L257.3 269.3L251.6 269.9L248.2 271.1L244.8 271.8L245.1 269.9L246.8 266.2L256.9 252.9L257.2 250.7L256.4 249.4L254.7 248.9L248.3 250.7L243.6 250.9L238.0 250.2L234.5 251.3L231.6 259.7L229.8 262.4L227.3 265.1L226.0 267.8L226.9 276.5L226.7 279.7L224.4 285.8L222.5 288.6L223.4 291.7L227.4 295.1L229.1 297.9L228.0 303.5L226.5 317.1L227.0 318.6L228.6 317.6L230.0 314.9L231.1 310.3L233.4 307.4L238.0 305.8L236.8 306.7L237.0 309.3L238.4 313.9L237.7 318.6L234.8 323.6L234.0 327.6L235.1 330.5L237.2 331.7L254.2 326.9L252.7 329.1L251.6 333.0L252.0 336.9L254.0 340.8L256.2 342.8L258.4 342.8L259.0 344.2L257.3 350.0L256.9 357.2L254.6 358.0L250.3 357.7L244.4 356.3L242.1 356.4L240.1 357.6L239.9 359.0L241.7 360.7L241.4 363.1L239.1 366.1L239.8 367.6L243.5 367.6L245.4 369.5L245.4 373.2L243.6 376.5L240.2 379.3L233.4 383.7L232.3 385.8L233.4 387.9L236.0 388.5L239.9 387.6L242.2 388.1L242.8 389.9L244.2 390.8L249.6 391.4L253.6 392.6L257.0 392.8L259.9 392.1L260.4 393.0L258.7 395.5L254.5 396.9L247.6 397.1L243.4 398.1L240.7 401.5L240.4 402.8L236.4 409.6L233.1 413.1L227.7 417.3L228.9 417.1L232.0 418.8L234.0 418.1L236.2 415.5ZM242.5 336.9L238.0 342.8L239.7 343.7L243.1 339.9ZM278.9 408.0L279.5 405.7L274.4 406.6L276.6 408.4ZM559.1 244.5L559.7 248.3L562.4 251.9L567.2 255.1L569.6 259.5L569.6 264.8L568.8 271.5L567.1 279.4L564.5 283.6L561.1 284.1L558.4 282.6L553.8 274.9L550.7 270.7L546.6 269.6L541.5 271.8L538.0 274.7L532.1 286.5L530.9 291.2L531.4 306.5L532.8 316.6L531.5 320.9L528.1 324.4L524.5 326.1L520.8 326.1L518.8 327.6L518.6 330.5L517.0 333.4L514.2 336.1L510.9 337.5L507.2 337.5L504.6 336.4L502.2 332.0L501.6 330.1L499.6 329.1L496.2 329.1L492.0 330.1L486.8 332.0L474.3 339.5L454.7 345.9L452.4 345.4L450.2 343.6L448.7 341.6L445.7 333.1L444.0 332.6L442.0 334.8L439.3 336.0L435.9 336.0L433.1 337.4L430.8 340.3L427.8 342.8L424.1 344.7L420.7 345.7L417.6 345.7L416.3 343.6L416.9 339.4L414.9 337.1L410.3 336.7L407.5 334.9L406.3 331.7L404.6 329.6L402.4 328.6L401.2 325.1L401.2 319.1L402.4 314.6L404.6 311.6L407.9 304.8L410.5 301.5L414.2 298.4L414.3 295.8L410.9 293.8L409.2 290.6L409.2 286.5L412.2 273.4L412.5 270.2L410.8 269.4L407.1 271.0L403.6 274.0L400.5 278.4L396.7 281.0L392.1 281.6L388.7 284.1L386.4 288.5L385.0 294.2L384.2 311.7L385.4 314.7L388.0 316.3L389.6 319.6L390.1 324.6L392.6 333.0L392.4 335.9L390.7 337.9L390.7 340.1L392.4 342.5L393.0 344.7L392.4 346.6L389.6 351.2L387.6 352.4L385.3 352.4L383.6 351.8L382.5 350.7L379.6 350.4L375.1 351.1L372.6 352.9L372.4 355.8L371.5 356.9L367.7 355.9L364.2 355.9L360.6 356.5L356.6 357.9L353.2 360.1L350.3 363.2L348.2 364.8L346.8 364.8L345.5 367.1L344.3 371.8L342.5 376.4L337.2 384.6L331.3 392.6L329.3 394.3L320.3 399.1L312.3 401.8L310.7 402.7L310.0 404.8L309.9 411.1L309.4 413.8L307.9 416.3L305.7 418.7L302.4 420.7L298.3 422.2L295.4 424.1L293.1 428.2L293.1 429.5L291.7 430.3L288.9 430.8L281.5 430.1L279.0 428.3L278.0 425.4L275.6 423.9L271.7 423.7L270.2 425.3L274.6 441.7L273.5 442.5L270.7 442.4L263.3 443.6L260.4 442.7L258.7 440.1L256.4 438.9L247.9 440.6L240.1 443.9L237.9 445.6L237.8 447.0L238.8 447.9L240.9 448.1L241.0 449.4L239.1 451.6L239.2 453.7L241.3 455.8L243.6 456.6L246.3 456.1L249.2 456.6L252.3 457.8L258.4 462.7L267.8 467.7L269.0 469.6L268.4 471.7L269.0 474.2L270.7 477.1L273.2 479.8L276.6 482.2L278.8 485.5L279.8 492.7L275.6 522.3L273.5 527.5L270.7 528.9L266.4 529.4L251.0 527.6L241.1 527.9L235.8 527.5L227.1 525.4L226.0 524.8L215.2 525.6L209.9 525.1L206.2 523.3L203.8 522.5L202.7 522.5L198.7 526.0L195.9 527.8L192.4 529.2L189.7 531.5L187.6 534.6L187.3 537.7L190.9 546.4L193.0 564.9L191.4 576.1L189.5 583.6L188.1 586.5L186.2 588.6L184.9 591.8L184.3 596.1L184.8 598.5L186.5 599.3L187.3 600.6L187.3 602.5L188.5 603.3L190.7 603.1L191.9 604.6L191.9 614.9L190.2 621.8L192.6 623.7L198.7 624.1L203.3 623.5L206.3 622.0L209.1 621.2L211.6 621.1L214.5 622.4L217.6 625.3L219.5 627.6L221.1 631.8L222.6 634.2L224.6 636.1L227.1 637.4L229.0 637.5L239.1 629.9L244.3 627.8L249.6 627.8L261.1 626.7L265.1 626.7L267.1 627.4L269.0 626.1L270.7 622.7L273.8 619.6L278.3 616.9L283.2 615.0L284.7 612.2L285.9 607.0L288.6 603.0L292.6 600.1L293.4 597.0L290.9 593.7L288.7 588.7L289.3 585.9L291.1 582.4L296.3 574.7L303.0 568.0L305.1 565.2L308.9 562.7L314.2 560.6L319.4 557.7L324.7 554.1L327.9 550.6L329.1 547.0L329.0 544.1L327.5 541.9L326.7 539.3L326.7 536.2L328.0 533.5L330.5 531.1L336.9 527.0L340.1 526.7L342.9 528.2L354.5 530.8L357.8 532.5L361.5 532.9L365.6 532.0L368.7 530.1L370.6 527.4L373.1 525.2L383.3 519.9L386.2 517.8L387.9 515.4L389.9 513.8L392.4 512.9L396.2 513.9L407.0 519.9L408.3 522.1L410.9 533.5L413.2 537.8L416.6 541.9L420.3 545.1L427.5 549.9L436.8 559.3L439.3 560.9L442.0 561.8L445.0 561.9L447.7 563.3L450.1 566.1L455.1 569.8L457.3 570.4L459.1 570.3L460.7 571.8L463.5 577.3L465.1 579.0L466.9 579.7L469.0 579.6L471.1 582.1L475.8 594.8L475.3 597.4L473.2 599.5L471.6 602.6L470.6 606.7L471.2 609.3L473.6 610.2L476.1 608.9L478.9 605.4L480.4 602.2L480.7 599.1L482.4 596.8L485.4 595.1L486.8 592.9L486.6 590.4L484.9 587.8L481.4 585.2L480.9 581.5L483.1 576.7L485.1 574.0L486.8 573.5L490.0 575.0L500.0 582.4L501.4 581.9L502.1 579.3L500.9 576.1L497.8 572.4L493.2 568.7L475.7 558.5L473.8 555.6L475.5 552.9L474.3 551.5L464.1 550.4L460.4 548.3L456.0 544.6L452.7 541.0L450.6 537.3L446.6 527.6L443.0 523.2L437.7 519.6L434.2 516.4L432.5 513.7L432.5 510.2L434.0 505.9L434.1 502.0L432.7 498.3L434.2 495.3L438.8 492.9L443.0 491.9L446.8 492.3L448.0 493.1L446.8 494.3L446.3 496.7L446.6 500.4L447.6 503.2L449.3 505.2L451.0 504.8L455.5 498.4L457.5 499.0L460.2 501.7L461.7 505.0L462.0 509.0L462.9 512.4L464.5 515.2L467.2 518.3L474.4 524.5L483.8 529.2L486.6 531.1L492.2 536.0L507.8 547.4L510.0 549.5L513.9 555.2L514.2 557.2L512.0 572.8L526.7 593.7L531.1 602.3L533.5 604.6L536.3 605.0L537.0 605.6L535.6 606.6L533.0 609.6L532.9 611.5L537.5 618.8L538.6 621.9L538.8 625.1L539.6 626.7L541.0 626.7L542.2 625.9L543.0 624.3L544.2 624.7L545.8 627.0L547.5 631.3L548.0 631.1L548.5 628.6L549.5 627.2L550.8 626.9L552.6 627.9L554.8 630.4L555.7 630.1L553.8 623.1L551.8 618.8L552.1 616.5L554.7 616.2L556.8 614.7L558.5 612.2L561.1 611.8L564.5 613.6L566.2 612.9L566.2 609.7L563.9 605.9L559.4 601.5L555.4 598.6L552.0 597.2L551.4 595.0L553.7 592.0L553.7 588.3L551.4 583.9L550.0 579.8L549.4 576.1L550.3 574.6L552.6 575.4L554.8 577.1L557.1 579.7L559.9 580.4L568.5 577.6L568.2 575.9L565.4 573.3L565.6 570.7L569.0 568.1L575.0 566.8L583.6 566.8L587.8 394.1L587.8 225.8L583.6 230.6L575.0 231.2L568.2 232.6L563.1 234.8L560.1 237.6L559.2 240.9ZM396.7 559.7L399.0 555.4L400.7 548.5L399.0 534.6L398.4 535.4L397.8 539.3L391.6 540.8L389.3 544.2L389.8 550.1L392.1 556.9ZM388.0 577.6L387.6 590.9L388.9 594.3L391.4 596.0L393.4 595.7L394.8 593.2L397.0 592.0L399.8 592.0L401.4 589.1L402.2 578.4L403.1 574.6L402.9 570.9L401.8 567.1L400.1 564.3L397.8 562.4L394.8 563.0L391.1 566.0L388.3 567.3L386.3 567.0L385.2 567.9L384.9 570.1L385.6 572.4L387.3 574.6ZM339.2 579.2L335.2 579.5L337.5 581.7L341.2 582.0ZM322.7 586.9L326.7 591.0L328.4 589.8L331.5 584.4L327.3 581.3L318.7 586.6ZM310.5 594.5L309.1 593.2L305.7 595.7L307.9 597.5ZM551.3 684.1L547.0 681.9L541.6 680.7L535.8 681.3L529.5 683.7L524.9 686.5L521.9 689.7L520.0 693.4L519.3 697.5L519.4 701.9L520.3 706.6L518.1 710.6L513.0 713.9L507.9 714.5L487.7 706.1L472.3 700.6L468.1 696.7L465.2 690.8L461.2 686.7L456.1 684.6L444.9 681.5L432.6 680.5L427.9 679.6L422.2 676.0L416.6 670.6L409.2 667.8L406.6 666.1L406.1 664.1L408.0 661.2L412.3 657.5L415.5 654.1L417.4 650.8L418.2 648.1L417.9 646.1L416.6 643.9L414.2 641.5L412.7 638.4L411.9 634.4L413.0 629.9L417.0 623.3L415.6 624.6L413.5 625.4L410.6 625.8L408.9 624.7L408.3 622.2L407.1 620.6L405.2 619.9L402.4 619.9L398.6 620.6L395.4 621.9L392.8 623.7L388.8 624.7L383.2 625.1L378.8 624.7L372.1 623.1L368.4 623.1L355.7 626.7L351.8 627.2L346.4 626.8L339.7 625.6L334.0 625.4L319.5 628.8L309.4 630.4L303.3 632.7L290.9 639.7L286.8 641.2L283.1 643.4L279.9 646.3L275.5 648.5L269.8 649.9L264.8 650.2L260.6 649.5L258.4 648.4L258.4 646.8L257.7 646.8L256.3 648.4L253.5 649.0L249.4 648.7L240.7 649.0L236.8 647.8L233.4 645.0L231.7 642.6L231.7 640.5L230.3 639.8L225.0 641.0L218.2 658.9L216.2 662.9L214.9 664.6L207.7 669.8L197.8 674.8L193.2 678.4L189.1 683.1L186.8 687.0L186.4 690.1L184.8 693.6L182.2 697.6L180.5 702.5L179.9 708.3L180.4 711.9L182.0 713.2L182.5 715.6L181.9 719.1L180.3 722.5L177.6 725.9L173.6 729.6L158.0 742.1L152.8 744.7L147.6 745.7L143.9 748.6L141.8 753.4L139.0 758.0L135.6 762.5L132.1 765.9L128.7 768.2L126.0 772.3L124.0 778.2L120.6 784.3L112.7 795.2L108.4 805.4L101.7 817.5L99.7 827.0L99.7 839.0L486.5 839.0L587.8 808.5L587.8 735.0L585.0 698.3L579.3 698.3L573.6 696.9L558.2 689.9L554.4 687.3ZM438.8 14.3L440.2 22.5L443.0 30.0L443.0 37.3L440.2 44.6L438.2 51.8L437.1 58.9L435.1 65.9L432.2 72.9L430.0 80.5L428.2 88.7L425.1 94.5L420.6 97.8L416.9 102.5L410.6 114.7L406.6 121.3L402.1 126.5L388.4 136.1L380.5 143.0L372.5 148.7L353.4 165.4L350.6 170.2L349.5 176.3L348.0 190.0L348.0 196.5L352.0 232.6L353.2 236.5L354.9 239.8L355.7 243.1L355.7 246.4L356.9 249.7L362.0 256.2L365.4 259.5L368.4 261.6L370.9 262.7L374.9 262.6L380.3 261.3L385.3 258.9L389.8 255.3L394.1 251.0L398.1 246.1L402.1 242.8L406.1 241.2L408.6 238.1L412.0 224.2L413.2 221.9L414.3 222.3L414.6 225.0L414.0 230.0L414.6 234.2L418.9 244.2L420.3 253.2L421.7 258.1L427.7 270.2L430.2 279.7L432.5 284.7L435.9 289.3L437.4 292.7L435.9 296.6L434.8 298.1L434.9 300.4L439.2 311.1L439.5 314.1L438.6 316.1L439.5 317.4L442.0 317.9L448.4 316.9L454.0 314.7L454.8 312.4L454.0 308.8L455.0 306.3L457.8 304.8L461.8 303.5L470.8 301.5L473.3 300.4L475.6 297.6L477.6 293.0L478.9 288.0L484.0 252.4L485.7 249.4L495.1 243.7L498.2 240.6L501.1 236.7L505.9 228.1L506.5 224.1L502.2 213.0L499.1 209.6L488.8 203.5L487.6 199.4L487.6 180.8L489.4 167.2L491.7 161.7L495.1 158.0L498.8 152.7L502.8 145.8L507.0 140.5L521.5 129.0L525.8 123.9L529.2 117.4L531.8 110.8L536.5 90.8L539.0 85.3L542.7 81.2L547.4 77.8L553.1 75.0L558.8 73.3L564.5 72.6L570.5 76.0L576.7 83.6L579.6 90.8L579.0 97.5L576.2 103.5L558.2 122.2L552.3 129.3L547.1 136.4L542.3 141.1L537.8 143.7L534.9 148.0L533.8 154.3L533.6 159.8L536.2 178.1L536.5 184.7L535.6 195.3L534.8 198.8L535.8 202.3L538.6 205.8L544.3 211.0L550.3 219.9L552.6 221.6L555.4 221.9L568.2 217.6L583.6 213.3L587.8 216.7L587.8 48.9L580.0 -30.0L455.5 -30.0L444.7 -13.4L440.8 -4.1L438.8 5.2ZM518.4 217.9L523.0 217.9L524.1 212.2L519.0 209.9L515.0 214.5ZM552.6 248.1L554.3 242.6L549.1 239.7L543.4 243.7L546.9 248.1ZM542.3 252.4L540.6 257.8L543.4 264.3L548.0 258.9L553.7 256.8L557.1 252.4L551.4 249.8ZM499.1 272.8L497.9 282.3L499.1 286.1L501.4 284.4L505.9 275.0L509.3 264.3L504.8 264.9ZM479.7 300.9L483.1 290.7L486.6 278.1L484.9 277.1L480.3 290.7L478.6 299.9ZM434.8 312.1L435.4 304.6L431.9 302.6L425.1 306.0L418.3 311.1L418.3 315.1L419.4 320.1L428.5 325.1L433.7 320.1L430.8 317.1ZM403.5 315.1L404.6 320.1L408.1 324.1L413.7 323.1L414.3 317.1L410.3 313.1ZM460.4 319.1L459.3 321.1L463.2 325.1L464.4 322.1ZM428.0 333.0L430.2 327.1L424.0 326.1L417.2 328.1L421.7 332.0ZM520.7 588.4L519.0 583.2L515.6 583.9L518.4 588.4ZM560.5 602.3L568.5 609.5L571.9 608.1L567.3 600.8L558.2 595.0L553.7 595.0ZM526.4 602.6L524.1 605.2L526.4 608.8L528.7 607.3ZM530.9 613.8L529.8 611.7L527.0 611.7L528.7 614.5ZM470.1 605.6L462.7 607.3L451.3 609.1L443.9 606.6L437.1 607.3L433.4 612.4L446.7 620.3L455.8 626.7L463.8 628.8L466.1 623.1L463.8 616.7ZM457.5 638.7L453.6 637.3L454.7 639.4L457.0 640.8Z" fill="#4a4a46" stroke="#9a96a0" stroke-width="0.7"/>
<path d="M432.5 242.6L438.8 233.7L446.7 232.6L451.9 239.2L450.2 248.1L442.2 253.5L435.4 254.6ZM452.4 267.5L457.0 263.2L462.1 250.2L461.5 244.8L457.0 250.2L453.6 261.1ZM474.0 231.4L483.1 228.1L492.2 229.2L495.7 233.7L485.4 234.8L476.3 234.8ZM349.5 364.8L354.0 365.7L358.6 371.4L354.6 376.0L350.0 375.1L349.5 369.5ZM393.8 459.3L402.4 460.2L400.1 461.8L394.4 461.0ZM362.0 483.5L366.0 478.5L371.1 479.4L366.0 481.0ZM496.8 474.4L498.5 471.1L488.8 474.4ZM412.0 495.7L414.3 493.3L415.4 489.2L413.2 491.7Z" fill="#768694" stroke="#768694" stroke-width="0.8" stroke-linejoin="round"/>
<path d="M347.8 193.6L360.3 192.4L371.6 193.6L378.5 188.9M353.4 224.7L360.3 216.8L367.1 209.9L370.5 214.5M353.4 237.0L360.3 234.8L364.8 239.2M350.0 174.5L360.3 175.7L369.4 176.9M360.3 161.1L369.4 162.3L373.9 167.2M378.5 147.4L385.3 152.4L389.8 154.9M401.2 131.0L409.2 134.8L416.0 127.1L421.7 121.9M419.4 98.2L428.5 103.5L434.2 98.2M431.9 79.2L439.9 76.4L443.3 69.5M438.8 59.6L446.7 59.6L452.4 56.8M442.2 33.7L455.8 30.7L466.1 32.2M439.9 12.8L457.0 11.3L471.8 0.6L480.9 -5.6M444.5 -5.6L458.1 -8.7L469.5 -18.1M400.1 243.7L402.4 239.2M412.6 222.4L412.0 234.8M386.4 292.7L394.4 290.7L397.8 285.5L408.1 284.4M232.8 294.8L239.7 284.4L244.2 275.0M230.6 303.0L235.1 299.9M228.3 279.2L231.7 278.1M229.4 266.4L234.0 265.4M254.5 304.6L248.8 304.0M259.0 295.8L254.5 297.3M36.0 70.9L28.0 68.1M26.9 77.8L34.9 75.0M42.8 112.8L47.4 111.5" fill="none" stroke="#768694" stroke-width="1.700" stroke-linecap="round" stroke-linejoin="round"/>
<path d="M309.1 415.1L314.8 424.0L311.3 432.7L313.6 443.1L301.1 448.3L294.3 460.2L281.8 463.5L278.3 471.9L279.5 481.8M280.6 444.8L278.3 455.1L268.1 460.2M313.6 443.1L330.7 446.6L327.3 460.2L317.0 470.2L303.4 476.9L294.3 460.2M330.7 446.6L337.5 429.3M337.5 429.3L347.8 443.1L359.1 453.4L370.5 455.1L377.3 460.2M327.3 460.2L339.8 465.2L353.4 461.8L359.1 453.4M317.0 470.2L318.2 481.8L335.2 483.5L342.1 483.5L352.3 480.2L361.4 480.2M318.2 481.8L317.0 501.4L307.9 504.6L294.3 499.8L286.3 491.7L280.6 486.8M317.0 501.4L325.0 507.8L336.4 506.2L345.5 514.2L356.9 515.8L363.7 504.6M307.9 504.6L303.4 515.8L293.1 520.5L288.6 530.0L286.3 536.2M345.5 514.2L339.8 526.8M212.4 526.8L213.5 536.2L214.6 550.1M240.8 528.4L237.4 536.2L247.6 537.7L255.6 531.5M247.6 537.7L256.7 542.4L263.6 536.2L271.5 530.0M256.7 542.4L271.5 550.1L270.4 559.2L279.5 569.8L289.7 569.8L295.4 569.8M271.5 550.1L284.0 537.7M300.0 539.3L300.0 557.7L295.4 569.8M213.5 565.3L227.1 575.8L240.8 575.8L252.2 577.2L256.7 562.2L270.4 559.2M252.2 577.2L246.5 565.3L254.5 563.7M212.4 584.7L227.1 575.8M212.4 606.6L228.3 608.1L237.4 600.8L257.9 603.7L265.8 609.5L274.9 602.3L281.8 599.3L289.7 597.9M265.8 609.5L272.7 618.1M279.5 569.8L278.3 581.7L281.8 599.3M240.8 575.8L231.7 587.6L237.4 600.8M401.2 328.1L404.6 352.4L412.6 356.2L420.6 361.9L424.0 363.8L438.8 360.0L450.2 354.3L454.7 358.1M389.8 352.4L391.0 375.1L399.0 389.9L408.1 393.5L412.6 389.9L420.6 361.9M360.3 400.8L371.6 408.0L383.0 404.4L391.0 375.1M399.0 389.9L404.6 411.6L400.1 416.9L394.4 427.5L387.6 422.2L383.0 418.7L371.6 408.0M408.1 393.5L404.6 411.6M412.6 389.9L428.5 397.2L430.8 411.6M428.5 397.2L439.9 389.9L459.3 389.9M424.0 363.8L430.8 378.8L439.9 389.9M394.4 427.5L401.2 427.5L408.1 441.4L406.9 460.2M404.6 411.6L417.2 411.6L429.7 413.4M387.6 422.2L385.3 436.7M370.5 513.4L383.0 511.0L396.7 509.4L405.8 512.6L414.9 517.4L431.9 520.5L437.6 520.5M388.7 483.5L391.0 503.0L396.7 509.4M394.4 489.5L411.5 490.0L412.6 501.4L421.7 504.6L431.9 503.0M411.5 490.0L411.5 478.5M412.6 501.4L396.7 504.6M421.7 504.6L414.9 517.4M417.2 474.1L426.3 490.0L436.5 485.1L433.1 475.2M436.5 485.1L441.0 491.7M409.2 520.5L427.4 530.0L431.9 520.5M427.4 530.0L426.3 540.8L421.7 543.9M427.4 530.0L438.8 540.8L450.1 536.2M438.8 540.8L443.3 554.6L450.2 560.7L447.9 562.2M443.3 554.6L452.4 554.6L462.7 551.6M452.4 554.6L463.8 560.7L472.9 562.2L474.0 569.8L482.0 574.3L484.3 574.3M463.8 560.7L469.5 574.3L470.6 579.5M469.5 574.3L474.0 569.8M471.8 581.7L480.9 581.0M482.0 335.0L483.1 354.3L474.0 363.8L471.8 377.0L459.3 377.0M483.1 354.3L496.8 352.4L511.6 358.1L516.1 336.9M496.8 352.4L502.5 371.4L511.6 378.8L518.4 365.7L511.6 358.1M471.8 377.0L477.5 389.9L496.8 397.2L502.5 371.4M477.5 389.9L462.7 395.4M496.8 397.2L503.6 415.1L496.8 418.7M503.6 415.1L515.0 409.8L513.9 425.7M515.0 409.8L519.6 397.2L511.6 378.8M519.6 397.2L537.8 399.0L540.0 411.6L523.0 415.1L515.0 409.8M540.0 411.6L552.6 413.4M537.8 399.0L541.2 382.5L556.0 377.0M518.4 365.7L537.8 354.3L551.4 346.6M537.8 354.3L550.3 375.1M540.0 411.6L533.2 427.5M431.9 166.0L457.0 172.1L479.7 167.2L490.0 163.5M435.4 195.9L457.0 184.1L470.6 195.9L486.6 195.9M457.0 184.1L457.0 172.1M470.6 195.9L467.2 214.5L482.0 214.5L490.0 205.3M434.2 212.2L454.7 219.0L467.2 214.5M454.7 219.0L454.7 241.5L468.4 245.9L482.0 214.5M426.3 237.0L454.7 241.5M454.7 241.5L451.3 263.2L443.3 282.3L433.1 280.2M451.3 263.2L467.2 263.2L482.0 265.4M468.4 245.9L484.3 250.2M443.3 282.3L445.6 296.8L438.8 296.8M445.6 296.8L457.0 300.9M457.0 300.9L467.2 282.3L467.2 263.2M467.2 282.3L478.6 286.5M452.4 110.2L474.0 121.9L502.5 142.4M457.0 87.4L479.7 90.1L502.5 108.8L530.5 114.0M474.0 121.9L479.7 90.1M478.6 39.5L502.5 62.4L525.2 79.2L537.8 87.4M348.9 193.6L371.6 191.2L386.4 184.1L386.4 164.8L394.4 162.3L405.8 157.4L429.7 147.4M386.4 164.8L371.6 157.4L354.6 169.7M386.4 184.1L377.3 202.9L372.8 219.0L366.0 230.3L354.6 234.8M377.3 202.9L394.4 205.3L411.5 212.2L434.2 212.2M372.8 219.0L383.0 237.0L373.9 248.1L364.8 256.8M383.0 237.0L397.8 241.5M394.4 205.3L396.7 228.1L410.3 230.3M405.8 157.4L411.5 184.1L411.5 212.2M394.4 162.3L401.2 132.2M428.5 139.9L417.2 102.1M422.0 96.8L438.8 92.8L457.0 87.4M280.6 647.8L286.3 657.5L295.4 653.4L303.4 646.4L302.3 633.3M303.4 646.4L317.0 649.2L321.6 629.5M317.0 649.2L326.1 658.9L337.5 652.0L340.9 633.8L334.2 625.4M337.5 652.0L352.3 652.0L355.7 638.0L352.3 628.1M355.7 638.0L369.4 640.8L372.8 625.3M369.4 640.8L371.6 654.8L386.4 652.0M352.3 652.0L354.6 665.8L371.6 654.8M272.7 669.9L292.0 672.6L295.4 653.4M292.0 672.6L309.1 686.2L326.1 676.7L326.1 658.9M326.1 676.7L354.6 665.8M354.6 665.8L360.3 686.2L386.4 686.2M309.1 686.2L297.7 712.9L274.9 712.9L250.5 707.6M297.7 712.9L320.4 719.5L331.8 699.6L326.1 676.7M331.8 699.6L360.3 686.2M320.4 719.5L326.1 751.9L292.0 764.7L263.6 751.9L235.1 719.5M326.1 751.9L360.3 739.0L404.6 739.0M360.3 739.0L360.3 686.2M292.0 764.7L303.4 802.4L280.6 814.7M303.4 802.4L348.9 789.9L360.3 739.0M348.9 789.9L377.3 833.1M386.4 632.4L397.8 633.8L408.1 628.1M397.8 633.8L400.1 645.0L411.5 643.6M387.6 647.8L400.1 645.0M400.1 645.0L401.2 657.5L411.5 657.5M386.4 657.5L401.2 657.5M401.2 657.5L394.4 669.9L405.8 671.3M383.0 675.3L394.4 669.9M394.4 669.9L403.5 686.2L414.9 688.9M223.7 647.8L235.1 654.8L246.5 653.4L252.2 649.2M235.1 654.8L231.7 668.5L215.8 667.2M231.7 668.5L246.5 671.3L257.9 663.0L269.2 657.5M246.5 653.4L246.5 671.3M206.7 672.6L218.0 682.1L231.7 668.5M218.0 682.1L223.7 692.9L240.8 686.2L246.5 671.3M187.3 688.9L203.3 687.5L218.0 682.1M203.3 687.5L207.8 702.3L223.7 692.9M181.6 702.3L207.8 702.3M207.8 702.3L212.4 715.5L229.4 708.9L240.8 686.2M182.8 716.8L212.4 715.5M240.8 686.2L257.9 688.9M175.9 728.6L195.3 724.7L212.4 715.5M123.6 789.9L155.5 789.9M422.8 687.5L434.2 695.6L428.5 680.8M434.2 695.6L445.6 699.6L446.7 682.1M445.6 699.6L457.0 702.3L460.4 687.5M457.0 702.3L468.4 719.5L491.1 707.6M409.2 706.3L434.2 706.3L434.2 695.6M434.2 706.3L439.9 739.0L405.8 741.6M439.9 739.0L468.4 719.5M439.9 739.0L457.0 771.0L411.5 777.3M457.0 771.0L491.1 751.9L491.1 707.6M457.0 771.0L468.4 806.1M491.1 751.9L530.9 751.9L530.9 712.9L520.2 706.7M530.9 751.9L548.0 789.9L496.8 820.9M530.9 712.9L553.7 712.9L559.3 690.4M548.0 789.9L587.8 789.9M451.3 427.5L468.4 425.7L479.7 429.3L491.1 427.5M451.3 427.5L454.7 415.1L468.4 413.4L477.5 413.4M468.4 425.7L468.4 413.4M442.2 422.2L451.3 427.5L451.3 441.4M479.7 429.3L484.3 441.4M491.1 427.5L491.1 415.1M442.2 422.2L443.3 409.8M496.8 450.0L502.5 437.9L500.2 431.0M502.5 437.9L517.3 443.1L519.6 432.7M517.3 443.1L518.4 450.8M523.0 437.9L533.2 443.1L534.3 429.3M439.9 455.9L449.0 460.2L460.4 456.8L462.7 448.3L461.5 443.1M430.8 465.2L439.9 468.6L449.0 460.2M439.9 468.6L449.0 471.9L459.3 470.2L474.0 470.2M460.4 456.8L474.0 461.8L478.6 463.5M449.0 471.9L447.9 478.2M408.1 465.7L410.9 471.9M462.7 448.3L484.3 448.3M487.1 453.4L495.7 465.2L488.8 471.9L479.7 470.2M495.7 465.2L505.9 465.2L508.2 456.8M505.9 465.2L505.9 478.5L499.1 486.8M505.9 478.5L488.8 471.9M505.9 465.2L516.1 466.9L521.8 483.5M516.1 466.9L523.0 455.1L525.2 444.8M523.0 455.1L536.6 456.8L542.3 448.3M528.7 471.9L536.6 456.8M516.1 466.9L528.7 471.9L534.3 476.9M466.1 495.4L471.8 499.8M477.5 478.5L484.3 499.0M492.8 489.2L495.1 502.2M464.9 512.6L471.2 506.2M475.2 515.8L474.2 524.3M487.7 509.4L488.8 526.8M500.2 506.2L501.4 525.3M482.0 522.1L488.8 526.8L492.8 536.2M508.7 505.1L519.6 503.0L534.3 499.8M519.6 503.0L523.0 518.9L515.0 518.9M523.0 518.9L536.6 518.9L545.7 511.0M523.0 518.9L526.4 531.5L523.5 537.0M536.6 518.9L540.0 531.5L535.5 537.0M540.0 531.5L549.1 530.0M542.3 463.5L553.7 473.6L550.3 483.5L534.3 476.9M550.3 483.5L542.3 494.9L530.9 498.2M542.3 494.9L553.7 498.2L560.5 507.8L550.3 510.2M553.7 473.6L565.1 465.2L556.0 455.1M565.1 465.2L576.4 470.2L586.0 466.0M553.7 498.2L570.8 493.3L585.3 494.7M560.5 507.8L568.5 522.9M553.7 473.6L565.1 483.5L570.8 493.3M553.7 532.3L565.1 534.6L568.5 522.9M565.1 534.6L570.8 545.5L559.4 550.1L548.0 547.0M570.8 545.5L584.1 545.5M559.4 550.1L562.8 558.4M527.5 578.7L536.6 583.2L533.2 592.0L528.7 595.0M536.6 583.2L545.7 581.7L550.3 581.7M530.9 567.5L536.6 583.2M545.7 581.7L542.3 572.8L542.3 563.0M533.2 592.0L542.3 595.0L550.3 596.4M542.3 595.0L540.0 604.4M536.6 609.5L545.7 612.4L551.4 610.9M545.7 612.4L542.3 623.8M553.7 569.8L559.4 559.2M565.1 569.8L567.3 557.7M532.1 319.1L542.3 313.1L553.7 321.1L559.4 313.1L570.8 315.1L576.4 300.9M542.3 313.1L542.3 296.8M553.7 321.1L553.7 336.9M559.4 313.1L557.1 296.8M531.6 288.5L542.3 286.5L552.6 296.8M542.3 286.5L549.1 271.8M552.6 286.5L559.4 284.4M560.6 249.5L570.8 243.7L570.8 232.6M570.8 243.7L587.8 245.9M570.8 254.6L576.4 264.3M534.3 162.3L553.7 167.2L570.8 157.4L587.8 164.8M535.5 195.9L548.0 188.9L553.7 167.2M538.3 205.5L553.7 207.6L557.1 219.0M553.7 207.6L548.0 188.9M553.7 207.6L570.8 195.9L587.8 198.3M553.9 127.3L570.8 142.4L570.8 157.4M568.5 111.5L587.8 121.9M559.4 53.9L587.8 68.1M570.8 72.2L587.8 76.4M385.9 290.7L397.8 292.7L409.2 292.7M385.0 313.6L396.7 309.1L405.5 310.1M397.8 292.7L396.7 309.1M396.7 309.1L399.0 328.1M351.5 362.0L359.1 367.6L361.4 375.1L368.2 373.2M359.1 367.6L370.5 363.8L372.8 360.0M344.3 377.0L348.9 378.8L355.7 377.0L361.4 375.1M348.9 378.8L350.0 386.2L359.7 385.7M337.5 386.2L350.0 386.2M350.0 386.2L348.9 392.3M355.7 397.2L362.5 393.5M328.4 395.4L330.7 404.4L337.5 406.2L348.9 405.3L356.3 404.4M337.5 406.2L339.8 394.1M348.9 405.3L351.2 395.4M339.8 413.9L340.9 406.2M348.9 405.3L348.9 415.1L356.9 411.6L361.7 416.4M192.7 560.7L203.3 560.7L212.4 562.2M192.4 570.5L203.3 569.8L213.5 571.3M203.3 560.7L203.3 569.8M191.1 578.0L202.1 581.7L212.4 581.7M186.2 590.6L197.6 590.6L206.7 587.6M197.6 590.6L198.7 600.8L210.1 600.8M191.9 602.3L198.7 600.8M191.9 616.7L206.7 616.7" fill="none" stroke="#aaa2ac" stroke-opacity="0.75" stroke-width="1" stroke-linejoin="round"/>
<path d="M422.3 243.7L426.3 237.0L425.1 228.1L427.4 221.3L434.2 212.2L435.4 195.9L430.8 188.9L430.2 179.3L431.9 166.0L429.7 147.4L428.5 139.9L436.5 121.9L447.9 120.6L452.4 110.2L447.3 106.2L457.0 87.4L457.0 63.9L468.4 59.6L478.6 39.5L475.2 27.8L482.0 12.8L495.7 9.8L498.5 -5.6L519.6 -0.9L523.0 -22.9M525.8 -23.2L530.9 -18.1L542.3 -5.6L554.8 12.8L560.5 30.7L559.9 53.9L566.8 73.6M390.7 327.2L399.0 329.1L403.5 329.1M373.9 359.1L372.2 370.4L368.2 373.2L372.2 377.9L368.2 384.4L359.7 385.7L362.5 393.5L359.7 399.9L360.3 405.3M330.3 394.1L340.4 394.1L348.9 392.3L358.6 398.1L356.3 404.4L360.3 405.3M360.3 405.3L364.2 412.5L361.7 416.4L366.0 422.2L364.5 428.0M361.7 416.4L357.4 421.3L358.0 426.6M321.0 399.4L327.8 404.8L339.8 413.9L339.2 419.0L347.2 416.0L347.2 422.2L358.0 426.6L364.5 428.0M364.5 428.0L368.8 433.3L376.8 433.3L385.3 436.7L380.7 444.8L378.2 451.7L378.5 460.5M378.5 460.5L389.3 456.8L400.7 461.3L401.2 469.4L410.9 471.9L410.9 477.7L405.8 481.8L397.8 478.5L394.4 489.5L388.1 479.4L381.3 488.1L372.2 488.1L369.4 480.2L361.4 484.3L361.4 477.7L371.6 465.2L378.5 460.5M372.2 488.1L367.7 501.4L372.2 507.8L370.5 513.4L379.6 517.4L377.3 522.4M271.7 529.2L277.2 533.9L284.0 536.5L300.0 539.3L308.5 540.8L311.9 543.1L328.1 543.5M191.3 552.0L198.7 548.5L199.8 553.1L216.9 550.8L221.5 556.9L213.5 565.3L214.6 575.0L212.4 584.7L206.7 585.4L212.9 595.0L208.9 603.0L212.4 606.6L206.7 616.0L207.8 621.3M453.6 346.3L455.8 358.1L453.0 366.7L458.1 371.4L459.8 381.6L458.1 386.2L462.7 395.4L460.4 403.2M460.4 403.2L454.7 400.8L445.6 406.2L439.3 411.6L429.7 413.4L434.2 419.6L434.2 425.7L449.0 440.2M460.4 403.2L466.1 401.7L474.0 408.0L478.6 409.8L484.3 410.7L482.0 416.9L493.4 413.4L496.8 418.7L506.5 427.5M449.0 440.2L459.3 443.1L462.7 436.2L475.2 440.5L484.9 443.1M484.9 443.1L487.7 438.5L497.9 434.5L506.5 427.5M506.5 427.5L513.3 425.7L517.3 432.7L526.4 429.3L537.8 428.7L548.6 434.8M449.0 440.2L444.5 447.1L437.1 451.7L439.9 455.9L438.8 461.8L430.8 459.3L417.2 463.5L410.9 461.0L408.1 465.7L400.7 461.3M410.9 471.9L417.2 474.1L430.2 468.9L433.1 475.2L447.9 478.2M447.9 478.2L457.5 480.2L470.1 475.2L475.2 472.4M475.2 472.4L479.7 470.2L479.2 463.5L486.0 458.5L487.1 453.4L484.9 443.1M487.1 453.4L494.5 457.6L506.5 456.8L508.2 452.2L518.4 451.2L525.2 444.8L536.1 443.6L544.0 446.6M548.6 434.8L544.0 446.6L552.6 454.2L542.3 463.5L538.3 470.2L534.3 476.9L522.4 484.8M548.6 434.8L550.3 425.7L565.1 409.8L560.5 391.7L560.5 380.7L556.0 377.0L563.9 369.5L564.5 346.6L559.4 345.7M522.4 484.8L514.4 484.0L507.0 487.9M507.0 487.9L501.4 490.8L492.8 489.2L480.9 479.0L477.5 478.0L475.2 472.4M447.9 478.2L444.5 483.5L446.7 490.0L448.7 493.3M446.7 495.4L454.7 495.4L466.1 495.4L470.1 489.5L470.1 483.1L477.5 478.0M471.2 506.2L471.8 499.8L484.3 499.0L495.1 502.2L503.6 501.7L508.7 505.1L512.2 504.6L509.9 512.6L515.0 518.9L510.5 526.8L507.0 529.2L501.9 541.6L492.8 536.2L482.0 522.1L475.2 515.8L471.2 506.2M508.7 505.1L508.2 496.5L507.0 487.9M522.4 484.8L530.9 498.2L536.6 505.4L544.0 511.0L550.3 510.2L549.7 515.8L546.3 522.1L553.7 532.3L546.3 545.5M549.7 515.8L553.7 522.1L570.8 522.9L584.7 521.0M507.0 529.2L511.6 534.6L520.1 538.5L523.5 537.0L520.7 541.6L515.0 541.6L511.6 551.6M520.7 541.6L526.4 551.6L525.2 560.7L527.5 566.8L530.9 567.5L527.5 578.7L520.0 584.4M526.4 551.6L532.1 547.0L537.8 546.2L546.3 545.5M523.5 537.0L528.7 530.7L535.5 537.0L537.8 546.2M530.9 567.5L542.3 563.0L553.1 560.0L546.3 545.5M553.1 560.0L565.1 557.7L579.9 561.5L583.7 560.7M515.6 336.0L526.4 337.5L551.4 337.9L559.4 345.7M551.4 337.9L550.3 326.1L542.3 323.1L533.8 320.1M531.5 303.6L542.3 296.8L552.6 296.8L575.3 296.8L587.8 311.1M569.5 265.8L579.9 263.2L587.8 272.8M267.0 650.6L272.1 656.1L272.7 669.9L280.6 686.2L277.8 691.6L259.0 692.2L250.5 697.6L250.5 707.6L235.1 719.5L218.0 724.7L193.4 736.4L193.4 749.7L193.4 754.5M193.4 749.7L143.4 749.7M193.4 754.5L193.4 771.0L155.5 771.0L155.5 803.0L144.1 808.5L143.0 820.9M193.4 754.5L237.0 783.6L274.9 811.0L286.3 820.9M389.8 624.6L385.9 631.7L387.0 647.8L385.9 656.8L377.3 664.4L377.3 668.5L384.2 678.1L395.0 691.6L400.1 716.2M423.4 677.1L422.8 687.5L409.2 696.9L408.1 708.9L400.1 716.2M400.1 716.2L404.6 732.5L404.1 745.5L405.2 758.3L399.0 768.5L405.8 786.1L422.8 792.4L428.3 802.4M428.3 802.4L377.3 834.3M428.3 802.4L453.6 813.5L462.7 808.5L515.0 830.4M208.9 324.1L206.1 330.1L199.3 336.0L208.9 341.8L216.3 343.7L220.9 342.8M257.3 325.7L263.6 319.1L268.7 309.1M256.7 359.1L257.9 371.4L256.2 382.5L261.8 389.9" fill="none" stroke="#b6aeb8" stroke-width="1.600" stroke-linejoin="round"/>
<path d="M64 0V809" stroke="#ff0000" stroke-opacity="0.490" stroke-width="2" fill="none"/>
<path d="M292 0V809" stroke="#ff0000" stroke-opacity="0.490" stroke-width="2" fill="none"/>
<path d="M520 0V809" stroke="#ff0000" stroke-opacity="0.490" stroke-width="2" fill="none"/>
<path d="M0 219H559" stroke="#ff0000" stroke-opacity="0.490" stroke-width="2" fill="none"/>
<path d="M0 419H559" stroke="#ff0000" stroke-opacity="0.490" stroke-width="2" fill="none"/>
<path d="M0 581H559" stroke="#ff0000" stroke-opacity="0.490" stroke-width="2" fill="none"/>
<path d="M0 720H559" stroke="#ff0000" stroke-opacity="0.490" stroke-width="2" fill="none"/>
<g font-family="Liberation Sans,sans-serif" font-weight="bold" font-size="20" fill="#ff0000" fill-opacity="0.570" text-anchor="middle">
<text x="170.0" y="109.0">IP</text>
<text x="400.0" y="109.0">JP</text>
<text x="171.4" y="340.0">IO</text>
<text x="401.6" y="340.0">JO</text>
<text x="170.6" y="518.0">IN</text>
<text x="400.5" y="518.0">JN</text>
<text x="171.7" y="667.3">IM</text>
<text x="401.6" y="667.3">JM</text>
<text x="170.0" y="799.0">IL</text>
<text x="401.0" y="798.5">JL</text>
</g>
<g fill="none" stroke="#f0f0f0" stroke-width="1.1">
<circle cx="414.0" cy="221.0" r="2.3" stroke="#3a3a38" stroke-width="2.6"/><circle cx="414.0" cy="221.0" r="2.3"/><circle cx="414.0" cy="221.0" r="0.7" fill="#f0f0f0" stroke="none"/>
<circle cx="498.0" cy="234.6" r="2.3" stroke="#3a3a38" stroke-width="2.6"/><circle cx="498.0" cy="234.6" r="2.3"/><circle cx="498.0" cy="234.6" r="0.7" fill="#f0f0f0" stroke="none"/>
<circle cx="406.0" cy="353.7" r="2.3" stroke="#3a3a38" stroke-width="2.6"/><circle cx="406.0" cy="353.7" r="2.3"/><circle cx="406.0" cy="353.7" r="0.7" fill="#f0f0f0" stroke="none"/>
<circle cx="444.0" cy="373.0" r="2.3" stroke="#3a3a38" stroke-width="2.6"/><circle cx="444.0" cy="373.0" r="2.3"/><circle cx="444.0" cy="373.0" r="0.7" fill="#f0f0f0" stroke="none"/>
<circle cx="290.4" cy="391.4" r="2.3" stroke="#3a3a38" stroke-width="2.6"/><circle cx="290.4" cy="391.4" r="2.3"/><circle cx="290.4" cy="391.4" r="0.7" fill="#f0f0f0" stroke="none"/>
<circle cx="319.0" cy="439.0" r="2.3" stroke="#3a3a38" stroke-width="2.6"/><circle cx="319.0" cy="439.0" r="2.3"/><circle cx="319.0" cy="439.0" r="0.7" fill="#f0f0f0" stroke="none"/>
<circle cx="474.0" cy="490.3" r="2.3" stroke="#3a3a38" stroke-width="2.6"/><circle cx="474.0" cy="490.3" r="2.3"/><circle cx="474.0" cy="490.3" r="0.7" fill="#f0f0f0" stroke="none"/>
<circle cx="316.8" cy="560.0" r="2.3" stroke="#3a3a38" stroke-width="2.6"/><circle cx="316.8" cy="560.0" r="2.3"/><circle cx="316.8" cy="560.0" r="0.7" fill="#f0f0f0" stroke="none"/>
<circle cx="408.0" cy="626.7" r="2.3" stroke="#3a3a38" stroke-width="2.6"/><circle cx="408.0" cy="626.7" r="2.3"/><circle cx="408.0" cy="626.7" r="0.7" fill="#f0f0f0" stroke="none"/>
<circle cx="214.0" cy="666.0" r="2.3" stroke="#3a3a38" stroke-width="2.6"/><circle cx="214.0" cy="666.0" r="2.3"/><circle cx="214.0" cy="666.0" r="0.7" fill="#f0f0f0" stroke="none"/>
<circle cx="327.0" cy="627.9" r="2.3" stroke="#3a3a38" stroke-width="2.6"/><circle cx="327.0" cy="627.9" r="2.3"/><circle cx="327.0" cy="627.9" r="0.7" fill="#f0f0f0" stroke="none"/>
<circle cx="442.0" cy="681.0" r="2.3" stroke="#3a3a38" stroke-width="2.6"/><circle cx="442.0" cy="681.0" r="2.3"/><circle cx="442.0" cy="681.0" r="0.7" fill="#f0f0f0" stroke="none"/>
</g>
<defs><filter id="hl" x="-10%" y="-30%" width="120%" height="160%"><feMorphology in="SourceAlpha" operator="dilate" radius="1.100" result="d"/><feGaussianBlur in="d" stdDeviation="0.400" result="b"/><feFlood flood-color="#3a3a38" result="c"/><feComposite in="c" in2="b" operator="in" result="h"/><feMerge><feMergeNode in="h"/><feMergeNode in="SourceGraphic"/></feMerge></filter></defs>
<g font-family="DejaVu Sans,Liberation Sans,sans-serif" fill="#f4f4f4" stroke="#f4f4f4" stroke-width="0.200" text-anchor="middle" filter="url(#hl)">
<text x="77.5" y="102.6" font-size="11" textLength="34.7" lengthAdjust="spacingAndGlyphs">Ísland</text>
<text x="423.0" y="111.6" font-size="11" textLength="34" lengthAdjust="spacingAndGlyphs">Norge</text>
<text x="464.5" y="174.6" font-size="11" textLength="41.4" lengthAdjust="spacingAndGlyphs">Sverige</text>
<text x="414.0" y="215.4" font-size="10.5" textLength="23.4" lengthAdjust="spacingAndGlyphs">Oslo</text>
<text x="497.7" y="249.0" font-size="10.5" textLength="54.3" lengthAdjust="spacingAndGlyphs">Stockholm</text>
<text x="399.7" y="305.3" font-size="11" textLength="52" lengthAdjust="spacingAndGlyphs">Danmark</text>
<text x="246.7" y="322.7" font-size="11.5" textLength="91.6" lengthAdjust="spacingAndGlyphs">United Kingdom</text>
<text x="267.0" y="338.2" font-size="9.5" textLength="56.5" lengthAdjust="spacingAndGlyphs" font-style="italic">Great Britain</text>
<text x="199.2" y="361.0" font-size="11" textLength="72.7" lengthAdjust="spacingAndGlyphs">Éire / Ireland</text>
<text x="405.3" y="349.8" font-size="10.5" textLength="49.7" lengthAdjust="spacingAndGlyphs">Hamburg</text>
<text x="444.0" y="367.7" font-size="10.5" textLength="31" lengthAdjust="spacingAndGlyphs">Berlin</text>
<text x="290.4" y="385.8" font-size="10.5" textLength="39.6" lengthAdjust="spacingAndGlyphs">London</text>
<text x="355.2" y="383.0" font-size="11" textLength="58.4" lengthAdjust="spacingAndGlyphs">Nederland</text>
<text x="510.0" y="386.7" font-size="11" textLength="35.8" lengthAdjust="spacingAndGlyphs">Polska</text>
<text x="412.0" y="402.6" font-size="11.5" textLength="70.8" lengthAdjust="spacingAndGlyphs">Deutschland</text>
<text x="319.0" y="433.5" font-size="10.5" textLength="25.2" lengthAdjust="spacingAndGlyphs">Paris</text>
<text x="468.3" y="428.0" font-size="11" textLength="34" lengthAdjust="spacingAndGlyphs">Česko</text>
<text x="515.4" y="446.9" font-size="11" textLength="56" lengthAdjust="spacingAndGlyphs">Slovensko</text>
<text x="313.0" y="477.9" font-size="11.5" textLength="37" lengthAdjust="spacingAndGlyphs">France</text>
<text x="509.7" y="472.5" font-size="11" textLength="79" lengthAdjust="spacingAndGlyphs">Magyarország</text>
<text x="497.7" y="494.5" font-size="10.5" textLength="37" lengthAdjust="spacingAndGlyphs">Zagreb</text>
<text x="464.5" y="517.7" font-size="11" textLength="49.4" lengthAdjust="spacingAndGlyphs">Hrvatska</text>
<text x="530.8" y="521.5" font-size="11" textLength="38.4" lengthAdjust="spacingAndGlyphs">Србија</text>
<text x="453.6" y="559.1" font-size="11.5" textLength="27.5" lengthAdjust="spacingAndGlyphs">Italia</text>
<text x="316.8" y="556.3" font-size="10.5" textLength="51" lengthAdjust="spacingAndGlyphs">Barcelona</text>
<text x="254.6" y="586.8" font-size="11.5" textLength="39" lengthAdjust="spacingAndGlyphs">España</text>
<text x="194.4" y="593.4" font-size="11" textLength="48" lengthAdjust="spacingAndGlyphs">Portugal</text>
<text x="544.5" y="602.0" font-size="11" textLength="36" lengthAdjust="spacingAndGlyphs">Ελλάς</text>
<text x="214.0" y="633.8" font-size="10.5" textLength="29" lengthAdjust="spacingAndGlyphs">Rabat</text>
<text x="214.0" y="646.4" font-size="10.5" textLength="28" lengthAdjust="spacingAndGlyphs">ⵔⴱⴰⵟ</text>
<text x="214.0" y="660.3" font-size="10.5" textLength="24" lengthAdjust="spacingAndGlyphs">الرباط</text>
<text x="326.2" y="642.2" font-size="10.5" textLength="27" lengthAdjust="spacingAndGlyphs">Alger</text>
<text x="326.2" y="655.4" font-size="10.5" textLength="40" lengthAdjust="spacingAndGlyphs">ⴷⵣⴰⵢⵔ</text>
<text x="326.2" y="668.6" font-size="10.5" textLength="26" lengthAdjust="spacingAndGlyphs">الجزائر</text>
<text x="407.2" y="621.8" font-size="10.5" textLength="25" lengthAdjust="spacingAndGlyphs">تونس</text>
<text x="397.8" y="671.0" font-size="11" textLength="25.6" lengthAdjust="spacingAndGlyphs">تونس</text>
<text x="441.0" y="676.5" font-size="10.5" textLength="35" lengthAdjust="spacingAndGlyphs">طرابلس</text>
<text x="176.6" y="735.0" font-size="11" textLength="83.6" lengthAdjust="spacingAndGlyphs">Maroc ⵍⵎⵖⵔⵉⴱ</text>
<text x="176.6" y="749.0" font-size="11" textLength="34" lengthAdjust="spacingAndGlyphs">المغرب</text>
<text x="298.7" y="741.5" font-size="11" textLength="49" lengthAdjust="spacingAndGlyphs">ⵍⵣⵣⴰⵢⴻⵔ</text>
<text x="298.7" y="755.5" font-size="11" textLength="29" lengthAdjust="spacingAndGlyphs">الجزائر</text>
<text x="488.6" y="771.0" font-size="11" textLength="19" lengthAdjust="spacingAndGlyphs">ليبيا</text>
<text x="567.0" y="293.0" font-size="11" textLength="38" lengthAdjust="spacingAndGlyphs">Latvija</text>
<text x="569.0" y="326.0" font-size="11" textLength="42" lengthAdjust="spacingAndGlyphs">Lietuva</text>
<text x="577.0" y="228.8" font-size="10.5" textLength="44" lengthAdjust="spacingAndGlyphs">Helsinki</text>
<text x="573.0" y="492.8" font-size="11" textLength="52" lengthAdjust="spacingAndGlyphs">România</text>
<text x="583.0" y="543.7" font-size="11" textLength="58" lengthAdjust="spacingAndGlyphs">България</text>
</g>

</svg>
<div class="a" style="left:10px;top:10px;width:34px;height:65px;border:2px solid rgba(0,0,0,0.2);border-radius:4px;background:#fff;background-clip:padding-box"></div>
<div class="a" style="left:12px;top:42px;width:30px;height:1px;background:#ccc"></div>
<div class="a" style="left:12px;top:12px;width:30px;height:30px;text-align:center;font:bold 18px/30px 'DejaVu Sans',sans-serif;color:#000;padding-left:1px">+</div>
<div class="a" style="left:12px;top:43px;width:30px;height:30px;text-align:center;font:bold 18px/29px 'DejaVu Sans',sans-serif;color:#000;padding-left:1px">−</div>
<div class="a" style="left:501px;top:10px;width:48px;height:48px;border:2px solid rgba(0,0,0,0.2);border-radius:5px;background:#fff;background-clip:padding-box"></div>
<svg class="a" style="left:503px;top:12px" width="44" height="44" viewBox="0 0 44 44"><g stroke="#a9a9a9" stroke-width="0.500" stroke-linejoin="round"><path d="M22 17.600l13.100 8.700-13.100 7.200-13.100-7.200z" fill="#c6c6c6"/><path d="M22 13.600l13.100 8.700-13.100 7.200-13.100-7.200z" fill="#d2d2d2"/><path d="M22 9.800l13.100 8.700-13.100 7.200-13.100-7.200z" fill="#e9e9e9"/><path d="M22 13.500l7.800 5.100-7.800 4.300-7.800-4.300z" fill="#dcdcdc" stroke="none"/></g></svg>
<div class="a" style="left:358px;top:793px;width:201px;height:16px;background:rgba(215,217,220,0.9);font:11px/17px 'Liberation Sans',sans-serif;color:#333;padding-left:5px"><span style="color:#0078a8">Leaflet</span> | © <span style="color:#0078a8">OpenStreetMap</span> contributors</div>

</div>
</div></body></html>
